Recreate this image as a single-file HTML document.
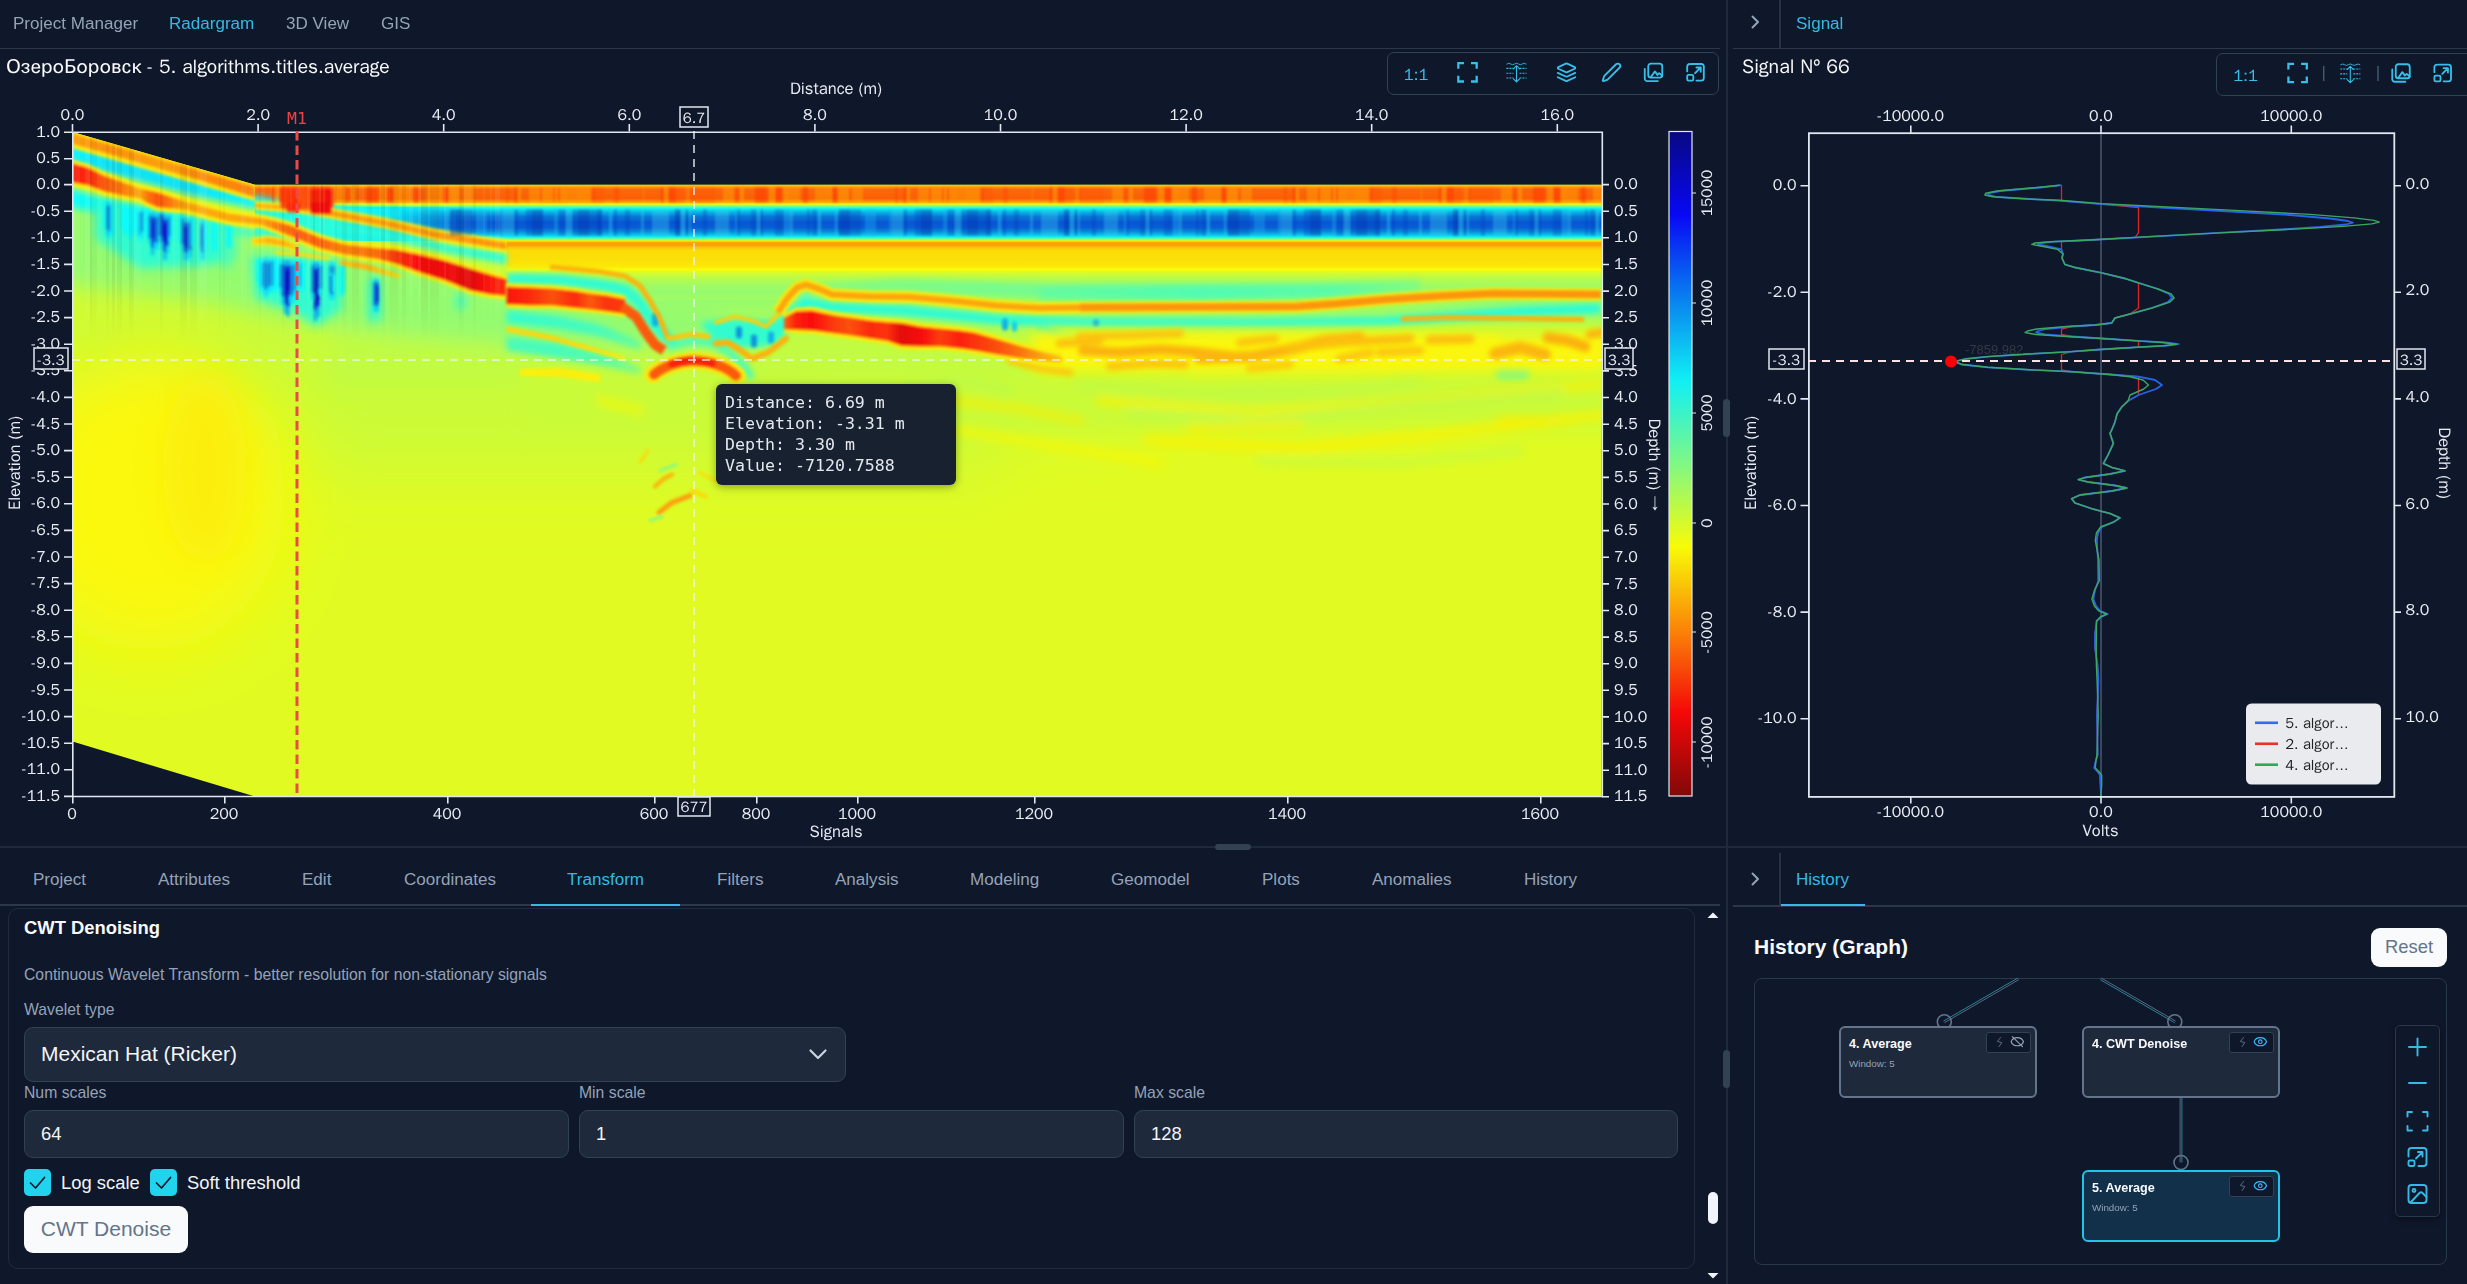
<!DOCTYPE html>
<html lang="en"><head><meta charset="utf-8"><title>Radargram</title>
<style>
*{box-sizing:border-box;margin:0;padding:0}
html,body{width:2467px;height:1284px;overflow:hidden;background:#0f172a}
body{position:relative;font-family:"Liberation Sans",sans-serif;color:#e2e8f0}
.abs{position:absolute}
.t{position:absolute;white-space:nowrap;line-height:1}
.tab{position:absolute;white-space:nowrap;font-size:17.06px;line-height:20px;color:#94a3b8}
.tab.on{color:#38b8e4}
.hl{position:absolute;height:1.5px;background:#2b384b}
.vl{position:absolute;width:2px;background:#263245}
.pf{font-family:"WenQuanYi Zen Hei","Liberation Sans",sans-serif}
.tb{position:absolute;border:1.5px solid #334155;border-radius:7px}
.lbl{position:absolute;white-space:nowrap;font-size:15.75px;line-height:18px;color:#94a3b8}
.inp{position:absolute;background:#1e293b;border:1.5px solid #334155;border-radius:9px;height:48px;font-size:18.4px;line-height:45px;padding-left:16px;color:#f1f5f9}
.cb{position:absolute;width:27px;height:27px;border-radius:5px;background:#22d3ee}
.node{position:absolute;width:198px;height:72px;border:2.5px solid #64748b;border-radius:6px;background:#1e293b}
.node b{position:absolute;left:8px;top:9px;font-size:12.6px;line-height:14px;color:#f8fafc;white-space:nowrap}
.node i{position:absolute;left:8px;top:30px;font-size:9.8px;line-height:11px;color:#94a3b8;font-style:normal;white-space:nowrap}
.node s{position:absolute;right:4px;top:4px;width:45px;height:21px;border:1px solid #334155;border-radius:3px;background:#0f172a;text-decoration:none}
svg{position:absolute;overflow:visible}
</style></head><body>
<svg style="left:0;top:0" width="1700" height="850" viewBox="0 0 1700 850"><defs><filter id="b1" filterUnits="userSpaceOnUse" x="0" y="60" width="1700" height="800"><feGaussianBlur stdDeviation="1"/></filter><filter id="b1_5" filterUnits="userSpaceOnUse" x="0" y="60" width="1700" height="800"><feGaussianBlur stdDeviation="1.5"/></filter><filter id="b2" filterUnits="userSpaceOnUse" x="0" y="60" width="1700" height="800"><feGaussianBlur stdDeviation="2"/></filter><filter id="b2_5" filterUnits="userSpaceOnUse" x="0" y="60" width="1700" height="800"><feGaussianBlur stdDeviation="2.5"/></filter><filter id="b3" filterUnits="userSpaceOnUse" x="0" y="60" width="1700" height="800"><feGaussianBlur stdDeviation="3"/></filter><filter id="b5" filterUnits="userSpaceOnUse" x="0" y="60" width="1700" height="800"><feGaussianBlur stdDeviation="5"/></filter><filter id="b7" filterUnits="userSpaceOnUse" x="0" y="60" width="1700" height="800"><feGaussianBlur stdDeviation="7"/></filter><filter id="b10" filterUnits="userSpaceOnUse" x="0" y="60" width="1700" height="800"><feGaussianBlur stdDeviation="10"/></filter><filter id="b18" filterUnits="userSpaceOnUse" x="0" y="60" width="1700" height="800"><feGaussianBlur stdDeviation="18"/></filter><filter id="b35" filterUnits="userSpaceOnUse" x="0" y="60" width="1700" height="800"><feGaussianBlur stdDeviation="35"/></filter><clipPath id="dc"><path d="M72.5 131.5 L255 184.2 H1601.6 V796 H255 L72.5 741 Z"/></clipPath><linearGradient id="rb" gradientUnits="userSpaceOnUse" x1="0" y1="184" x2="0" y2="300"><stop offset="0.0000" stop-color="#fbde08"/><stop offset="0.0129" stop-color="#fbb208"/><stop offset="0.0388" stop-color="#fb6908"/><stop offset="0.1207" stop-color="#fb5f08"/><stop offset="0.1509" stop-color="#fb9f08"/><stop offset="0.1681" stop-color="#fbf608"/><stop offset="0.1853" stop-color="#81fb81"/><stop offset="0.2026" stop-color="#16fbed"/><stop offset="0.2328" stop-color="#08bce9"/><stop offset="0.2759" stop-color="#0878d4"/><stop offset="0.3276" stop-color="#0856d4"/><stop offset="0.3707" stop-color="#085fd4"/><stop offset="0.4052" stop-color="#088bd8"/><stop offset="0.4353" stop-color="#08c6ed"/><stop offset="0.4569" stop-color="#20fbe3"/><stop offset="0.4724" stop-color="#95fb6e"/><stop offset="0.4853" stop-color="#fbed08"/><stop offset="0.5000" stop-color="#fba408"/><stop offset="0.5216" stop-color="#fb9f08"/><stop offset="0.5431" stop-color="#fbc608"/><stop offset="0.5690" stop-color="#fbdc08"/><stop offset="0.6724" stop-color="#fbe208"/><stop offset="0.7069" stop-color="#fbea08"/><stop offset="0.7328" stop-color="#fbfb08"/><stop offset="0.7586" stop-color="#d9fb2a"/><stop offset="0.8017" stop-color="#bcfb47"/><stop offset="0.8707" stop-color="#9ffb64"/><stop offset="0.9310" stop-color="#95fb6e"/><stop offset="1.0000" stop-color="#a4fb5f"/></linearGradient><linearGradient id="rf" x1="0" y1="0" x2="0" y2="1"><stop offset="0" stop-color="#95fb6e"/><stop offset="1" stop-color="#95fb6e" stop-opacity="0"/></linearGradient><linearGradient id="cf" gradientUnits="userSpaceOnUse" x1="330" y1="0" x2="478" y2="0"><stop offset="0" stop-color="#20fbe3"/><stop offset=".45" stop-color="#08edfb" stop-opacity=".85"/><stop offset="1" stop-color="#08b2e6" stop-opacity="0"/></linearGradient><pattern id="so" patternUnits="userSpaceOnUse" x="255" y="0" width="389" height="800"><rect x="17" y="187" width="3" height="15" fill="#ff2a00" opacity="0.45"/><rect x="20" y="187" width="4" height="15" fill="#ffc400" opacity="0.3"/><rect x="24" y="187" width="8" height="15" fill="#ff2a00" opacity="0.45"/><rect x="32" y="187" width="8" height="15" fill="#ff5000" opacity="0.3"/><rect x="43" y="187" width="2" height="15" fill="#ffc400" opacity="0.3"/><rect x="47" y="187" width="2" height="15" fill="#ff3c00" opacity="0.3"/><rect x="49" y="187" width="5" height="15" fill="#ff5000" opacity="0.3"/><rect x="54" y="187" width="3" height="15" fill="#ff5000" opacity="0.3"/><rect x="57" y="187" width="3" height="15" fill="#ff5000" opacity="0.3"/><rect x="60" y="187" width="4" height="15" fill="#ff5000" opacity="0.3"/><rect x="64" y="187" width="3" height="15" fill="#ff5000" opacity="0.3"/><rect x="67" y="187" width="4" height="15" fill="#ff5000" opacity="0.3"/><rect x="79" y="187" width="11" height="15" fill="#ffc400" opacity="0.3"/><rect x="90" y="187" width="6" height="15" fill="#ff3c00" opacity="0.3"/><rect x="96" y="187" width="4" height="15" fill="#ffb000" opacity="0.45"/><rect x="111" y="187" width="11" height="15" fill="#ff2a00" opacity="0.45"/><rect x="122" y="187" width="3" height="15" fill="#ff3c00" opacity="0.3"/><rect x="125" y="187" width="6" height="15" fill="#ffc400" opacity="0.3"/><rect x="131" y="187" width="8" height="15" fill="#ff2a00" opacity="0.45"/><rect x="139" y="187" width="6" height="15" fill="#ffb000" opacity="0.45"/><rect x="145" y="187" width="11" height="15" fill="#ffc400" opacity="0.3"/><rect x="159" y="187" width="5" height="15" fill="#ff2a00" opacity="0.45"/><rect x="171" y="187" width="11" height="15" fill="#ffc400" opacity="0.3"/><rect x="182" y="187" width="6" height="15" fill="#ffc400" opacity="0.3"/><rect x="188" y="187" width="6" height="15" fill="#ff2a00" opacity="0.45"/><rect x="194" y="187" width="11" height="15" fill="#ffb000" opacity="0.45"/><rect x="208" y="187" width="8" height="15" fill="#ffc400" opacity="0.3"/><rect x="216" y="187" width="3" height="15" fill="#ffc400" opacity="0.3"/><rect x="251" y="187" width="3" height="15" fill="#ff3c00" opacity="0.3"/><rect x="258" y="187" width="2" height="15" fill="#ff5000" opacity="0.3"/><rect x="260" y="187" width="3" height="15" fill="#ff2a00" opacity="0.45"/><rect x="263" y="187" width="3" height="15" fill="#ffb000" opacity="0.45"/><rect x="272" y="187" width="2" height="15" fill="#ff5000" opacity="0.3"/><rect x="274" y="187" width="8" height="15" fill="#ffc400" opacity="0.3"/><rect x="282" y="187" width="3" height="15" fill="#ffc400" opacity="0.3"/><rect x="285" y="187" width="2" height="15" fill="#ff3c00" opacity="0.3"/><rect x="287" y="187" width="11" height="15" fill="#ffb000" opacity="0.45"/><rect x="298" y="187" width="2" height="15" fill="#ff5000" opacity="0.3"/><rect x="300" y="187" width="3" height="15" fill="#ffb000" opacity="0.45"/><rect x="303" y="187" width="2" height="15" fill="#ff3c00" opacity="0.3"/><rect x="305" y="187" width="8" height="15" fill="#ffb000" opacity="0.45"/><rect x="313" y="187" width="6" height="15" fill="#ffc400" opacity="0.3"/><rect x="319" y="187" width="3" height="15" fill="#ffc400" opacity="0.3"/><rect x="322" y="187" width="11" height="15" fill="#ffb000" opacity="0.45"/><rect x="333" y="187" width="3" height="15" fill="#ffb000" opacity="0.45"/><rect x="336" y="187" width="5" height="15" fill="#ff3c00" opacity="0.3"/><rect x="341" y="187" width="2" height="15" fill="#ff5000" opacity="0.3"/><rect x="343" y="187" width="6" height="15" fill="#ff5000" opacity="0.3"/><rect x="359" y="187" width="5" height="15" fill="#ff3c00" opacity="0.3"/><rect x="388" y="187" width="4" height="15" fill="#ffc400" opacity="0.3"/><rect x="8" y="209" width="11" height="26" fill="#40e0f8" opacity="0.3"/><rect x="19" y="209" width="6" height="26" fill="#40e0f8" opacity="0.3"/><rect x="31" y="209" width="6" height="26" fill="#0424a8" opacity="0.4"/><rect x="37" y="209" width="4" height="26" fill="#30d8f8" opacity="0.4"/><rect x="41" y="209" width="4" height="26" fill="#0630b4" opacity="0.25"/><rect x="45" y="209" width="2" height="26" fill="#40e0f8" opacity="0.3"/><rect x="59" y="209" width="4" height="26" fill="#0838c0" opacity="0.3"/><rect x="71" y="209" width="6" height="26" fill="#40e0f8" opacity="0.3"/><rect x="77" y="209" width="8" height="26" fill="#40e0f8" opacity="0.3"/><rect x="91" y="209" width="2" height="26" fill="#20b8f8" opacity="0.32"/><rect x="93" y="209" width="3" height="26" fill="#0630b4" opacity="0.25"/><rect x="107" y="209" width="6" height="26" fill="#0630b4" opacity="0.25"/><rect x="113" y="209" width="3" height="26" fill="#40e0f8" opacity="0.3"/><rect x="116" y="209" width="3" height="26" fill="#0838c0" opacity="0.3"/><rect x="131" y="209" width="4" height="26" fill="#0838c0" opacity="0.3"/><rect x="135" y="209" width="5" height="26" fill="#0630b4" opacity="0.25"/><rect x="140" y="209" width="6" height="26" fill="#20b8f8" opacity="0.32"/><rect x="146" y="209" width="3" height="26" fill="#40e0f8" opacity="0.3"/><rect x="163" y="209" width="3" height="26" fill="#0630b4" opacity="0.25"/><rect x="168" y="209" width="3" height="26" fill="#0838c0" opacity="0.3"/><rect x="171" y="209" width="3" height="26" fill="#0630b4" opacity="0.25"/><rect x="174" y="209" width="3" height="26" fill="#30d8f8" opacity="0.4"/><rect x="191" y="209" width="2" height="26" fill="#30d8f8" opacity="0.4"/><rect x="195" y="209" width="11" height="26" fill="#0424a8" opacity="0.4"/><rect x="206" y="209" width="11" height="26" fill="#0630b4" opacity="0.25"/><rect x="221" y="209" width="11" height="26" fill="#20b8f8" opacity="0.32"/><rect x="245" y="209" width="3" height="26" fill="#20b8f8" opacity="0.32"/><rect x="248" y="209" width="11" height="26" fill="#40e0f8" opacity="0.3"/><rect x="259" y="209" width="4" height="26" fill="#0838c0" opacity="0.3"/><rect x="271" y="209" width="6" height="26" fill="#0838c0" opacity="0.3"/><rect x="277" y="209" width="11" height="26" fill="#0424a8" opacity="0.4"/><rect x="299" y="209" width="4" height="26" fill="#20b8f8" opacity="0.32"/><rect x="303" y="209" width="8" height="26" fill="#0838c0" opacity="0.3"/><rect x="311" y="209" width="6" height="26" fill="#40e0f8" opacity="0.3"/><rect x="317" y="209" width="6" height="26" fill="#0630b4" opacity="0.25"/><rect x="323" y="209" width="11" height="26" fill="#0424a8" opacity="0.4"/><rect x="334" y="209" width="8" height="26" fill="#0630b4" opacity="0.25"/><rect x="342" y="209" width="5" height="26" fill="#0424a8" opacity="0.4"/><rect x="354" y="209" width="3" height="26" fill="#30d8f8" opacity="0.4"/><rect x="359" y="209" width="3" height="26" fill="#0838c0" opacity="0.3"/><rect x="370" y="209" width="5" height="26" fill="#0630b4" opacity="0.25"/><rect x="386" y="209" width="3" height="26" fill="#40e0f8" opacity="0.3"/></pattern><linearGradient id="g1" gradientUnits="userSpaceOnUse" x1="66" y1="0" x2="400" y2="0"><stop offset="0.000" stop-color="#08f6fb"/><stop offset="0.132" stop-color="#08e3f8"/><stop offset="0.374" stop-color="#08e3f8"/><stop offset="0.566" stop-color="#08f6fb"/><stop offset="0.734" stop-color="#0dfbf6"/><stop offset="0.880" stop-color="#0dfbf6"/><stop offset="1.000" stop-color="#08edfb"/></linearGradient><linearGradient id="g2" gradientUnits="userSpaceOnUse" x1="66" y1="0" x2="300" y2="0"><stop offset="0.000" stop-color="#0dfbf6"/><stop offset="0.145" stop-color="#0dfbf6"/><stop offset="0.359" stop-color="#20fbe3"/><stop offset="0.615" stop-color="#33fbcf"/><stop offset="0.808" stop-color="#47fbbc"/><stop offset="1.000" stop-color="#5afba8"/></linearGradient><linearGradient id="g3" gradientUnits="userSpaceOnUse" x1="300" y1="0" x2="506.5" y2="0"><stop offset="0.000" stop-color="#33fbcf"/><stop offset="0.097" stop-color="#2afbd9"/><stop offset="0.412" stop-color="#2afbd9"/><stop offset="0.731" stop-color="#2afbd9"/><stop offset="1.000" stop-color="#2afbd9"/></linearGradient><linearGradient id="g4" gradientUnits="userSpaceOnUse" x1="66" y1="0" x2="255" y2="0"><stop offset="0.000" stop-color="#fb9f08"/><stop offset="0.233" stop-color="#fb9008"/><stop offset="0.497" stop-color="#fb9f08"/><stop offset="0.709" stop-color="#fb8b08"/><stop offset="1.000" stop-color="#fb8108"/></linearGradient><linearGradient id="g5" gradientUnits="userSpaceOnUse" x1="66" y1="0" x2="506.5" y2="0"><stop offset="0.000" stop-color="#fb1608"/><stop offset="0.050" stop-color="#fb2a08"/><stop offset="0.086" stop-color="#fb5a08"/><stop offset="0.134" stop-color="#fb8108"/><stop offset="0.168" stop-color="#fba808"/><stop offset="0.184" stop-color="#fb7808"/><stop offset="0.209" stop-color="#fb5108"/><stop offset="0.236" stop-color="#fb7808"/><stop offset="0.270" stop-color="#fba808"/><stop offset="0.370" stop-color="#fba808"/><stop offset="0.445" stop-color="#fb9f08"/><stop offset="0.474" stop-color="#fb8108"/><stop offset="0.509" stop-color="#fb6408"/><stop offset="0.577" stop-color="#fb6408"/><stop offset="0.633" stop-color="#fb8108"/><stop offset="0.706" stop-color="#fb6e08"/><stop offset="0.747" stop-color="#fb3d08"/><stop offset="0.799" stop-color="#fb0d08"/><stop offset="0.860" stop-color="#f10808"/><stop offset="0.917" stop-color="#e30808"/><stop offset="0.963" stop-color="#fb1608"/><stop offset="1.000" stop-color="#fb3308"/></linearGradient><linearGradient id="g6" gradientUnits="userSpaceOnUse" x1="255" y1="0" x2="506.5" y2="0"><stop offset="0.000" stop-color="#fbb208"/><stop offset="0.179" stop-color="#fb9f08"/><stop offset="0.302" stop-color="#fb9f08"/><stop offset="0.517" stop-color="#fb9f08"/><stop offset="0.714" stop-color="#fb9a08"/><stop offset="0.909" stop-color="#fb9508"/><stop offset="1.000" stop-color="#fb9508"/></linearGradient><linearGradient id="g7" gradientUnits="userSpaceOnUse" x1="252" y1="0" x2="298" y2="0"><stop offset="0.000" stop-color="#fbd908"/><stop offset="0.348" stop-color="#fbb208"/><stop offset="0.717" stop-color="#fbb208"/><stop offset="1.000" stop-color="#fbcf08"/></linearGradient><linearGradient id="g8" gradientUnits="userSpaceOnUse" x1="275" y1="0" x2="330" y2="0"><stop offset="0.000" stop-color="#fbe308"/><stop offset="0.455" stop-color="#fbd908"/><stop offset="1.000" stop-color="#fbe308"/></linearGradient><linearGradient id="g9" gradientUnits="userSpaceOnUse" x1="340" y1="0" x2="400" y2="0"><stop offset="0.000" stop-color="#fbc608"/><stop offset="0.417" stop-color="#fbb208"/><stop offset="1.000" stop-color="#fbd908"/></linearGradient><linearGradient id="g10" gradientUnits="userSpaceOnUse" x1="506.5" y1="0" x2="640" y2="0"><stop offset="0.000" stop-color="#33fbcf"/><stop offset="0.401" stop-color="#3dfbc6"/><stop offset="0.700" stop-color="#47fbbc"/><stop offset="1.000" stop-color="#64fb9f"/></linearGradient><linearGradient id="g11" gradientUnits="userSpaceOnUse" x1="506.5" y1="0" x2="640" y2="0"><stop offset="0.000" stop-color="#47fbbc"/><stop offset="0.401" stop-color="#47fbbc"/><stop offset="0.700" stop-color="#5afba8"/><stop offset="1.000" stop-color="#81fb81"/></linearGradient><linearGradient id="g12" gradientUnits="userSpaceOnUse" x1="1040" y1="0" x2="1420" y2="0"><stop offset="0.000" stop-color="#64fb9f"/><stop offset="0.421" stop-color="#51fbb2"/><stop offset="0.763" stop-color="#5afba8"/><stop offset="1.000" stop-color="#81fb81"/></linearGradient><linearGradient id="g13" gradientUnits="userSpaceOnUse" x1="790" y1="0" x2="1040" y2="0"><stop offset="0.000" stop-color="#81fb81"/><stop offset="0.440" stop-color="#6efb95"/><stop offset="1.000" stop-color="#64fb9f"/></linearGradient><linearGradient id="g14" gradientUnits="userSpaceOnUse" x1="506.5" y1="0" x2="625" y2="0"><stop offset="0.000" stop-color="#fb1608"/><stop offset="0.198" stop-color="#fb2a08"/><stop offset="0.384" stop-color="#fb5108"/><stop offset="0.578" stop-color="#fb2a08"/><stop offset="0.705" stop-color="#fb5a08"/><stop offset="0.848" stop-color="#fb3308"/><stop offset="1.000" stop-color="#fb3d08"/></linearGradient><linearGradient id="g15" gradientUnits="userSpaceOnUse" x1="506.5" y1="0" x2="625" y2="0"><stop offset="0.000" stop-color="#fbd908"/><stop offset="0.367" stop-color="#fbd408"/><stop offset="0.705" stop-color="#fbde08"/><stop offset="1.000" stop-color="#fbed08"/></linearGradient><linearGradient id="g16" gradientUnits="userSpaceOnUse" x1="520" y1="0" x2="600" y2="0"><stop offset="0.000" stop-color="#fbf108"/><stop offset="0.500" stop-color="#fbed08"/><stop offset="1.000" stop-color="#fbf108"/></linearGradient><linearGradient id="g17" gradientUnits="userSpaceOnUse" x1="784" y1="0" x2="1062" y2="0"><stop offset="0.000" stop-color="#fb6408"/><stop offset="0.043" stop-color="#fb2008"/><stop offset="0.101" stop-color="#fb0d08"/><stop offset="0.183" stop-color="#fb3d08"/><stop offset="0.237" stop-color="#fb5108"/><stop offset="0.309" stop-color="#fb2a08"/><stop offset="0.371" stop-color="#fb3308"/><stop offset="0.424" stop-color="#e30808"/><stop offset="0.489" stop-color="#f60808"/><stop offset="0.561" stop-color="#fb3d08"/><stop offset="0.633" stop-color="#fb2008"/><stop offset="0.683" stop-color="#fb3308"/><stop offset="0.777" stop-color="#fb5108"/><stop offset="0.856" stop-color="#fb7808"/><stop offset="0.921" stop-color="#fb9f08"/><stop offset="1.000" stop-color="#fbc608"/></linearGradient><pattern id="vs" patternUnits="userSpaceOnUse" x="72" y="0" width="467" height="800"><rect x="0" y="0" width="3" height="800" fill="#fff" opacity="0.08"/><rect x="3" y="0" width="2" height="800" fill="#fff" opacity="0.05"/><rect x="5" y="0" width="3" height="800" fill="#fff" opacity="0.05"/><rect x="13" y="0" width="5" height="800" fill="#fff" opacity="0.08"/><rect x="18" y="0" width="2" height="800" fill="#400" opacity="0.07"/><rect x="20" y="0" width="5" height="800" fill="#400" opacity="0.03"/><rect x="25" y="0" width="5" height="800" fill="#fff" opacity="0.03"/><rect x="34" y="0" width="3" height="800" fill="#400" opacity="0.05"/><rect x="40" y="0" width="3" height="800" fill="#400" opacity="0.07"/><rect x="43" y="0" width="2" height="800" fill="#fff" opacity="0.03"/><rect x="45" y="0" width="3" height="800" fill="#400" opacity="0.05"/><rect x="48" y="0" width="2" height="800" fill="#400" opacity="0.07"/><rect x="57" y="0" width="3" height="800" fill="#400" opacity="0.07"/><rect x="60" y="0" width="2" height="800" fill="#400" opacity="0.05"/><rect x="62" y="0" width="7" height="800" fill="#fff" opacity="0.05"/><rect x="86" y="0" width="2" height="800" fill="#fff" opacity="0.03"/><rect x="88" y="0" width="3" height="800" fill="#400" opacity="0.05"/><rect x="101" y="0" width="2" height="800" fill="#fff" opacity="0.05"/><rect x="108" y="0" width="7" height="800" fill="#400" opacity="0.07"/><rect x="115" y="0" width="3" height="800" fill="#fff" opacity="0.05"/><rect x="118" y="0" width="7" height="800" fill="#400" opacity="0.05"/><rect x="125" y="0" width="3" height="800" fill="#fff" opacity="0.03"/><rect x="128" y="0" width="2" height="800" fill="#fff" opacity="0.08"/><rect x="130" y="0" width="5" height="800" fill="#fff" opacity="0.08"/><rect x="147" y="0" width="2" height="800" fill="#400" opacity="0.03"/><rect x="151" y="0" width="2" height="800" fill="#400" opacity="0.03"/><rect x="169" y="0" width="2" height="800" fill="#fff" opacity="0.08"/><rect x="171" y="0" width="4" height="800" fill="#fff" opacity="0.05"/><rect x="177" y="0" width="2" height="800" fill="#fff" opacity="0.05"/><rect x="179" y="0" width="3" height="800" fill="#fff" opacity="0.05"/><rect x="187" y="0" width="2" height="800" fill="#400" opacity="0.03"/><rect x="189" y="0" width="4" height="800" fill="#fff" opacity="0.05"/><rect x="198" y="0" width="2" height="800" fill="#fff" opacity="0.05"/><rect x="205" y="0" width="2" height="800" fill="#fff" opacity="0.08"/><rect x="210" y="0" width="2" height="800" fill="#400" opacity="0.07"/><rect x="218" y="0" width="2" height="800" fill="#fff" opacity="0.05"/><rect x="225" y="0" width="2" height="800" fill="#fff" opacity="0.03"/><rect x="230" y="0" width="2" height="800" fill="#fff" opacity="0.03"/><rect x="235" y="0" width="3" height="800" fill="#fff" opacity="0.08"/><rect x="241" y="0" width="2" height="800" fill="#400" opacity="0.07"/><rect x="247" y="0" width="2" height="800" fill="#fff" opacity="0.08"/><rect x="249" y="0" width="2" height="800" fill="#400" opacity="0.07"/><rect x="251" y="0" width="2" height="800" fill="#fff" opacity="0.05"/><rect x="258" y="0" width="5" height="800" fill="#fff" opacity="0.03"/><rect x="263" y="0" width="2" height="800" fill="#400" opacity="0.03"/><rect x="270" y="0" width="5" height="800" fill="#400" opacity="0.05"/><rect x="280" y="0" width="7" height="800" fill="#400" opacity="0.05"/><rect x="287" y="0" width="3" height="800" fill="#fff" opacity="0.03"/><rect x="290" y="0" width="2" height="800" fill="#fff" opacity="0.05"/><rect x="295" y="0" width="2" height="800" fill="#400" opacity="0.03"/><rect x="297" y="0" width="3" height="800" fill="#400" opacity="0.05"/><rect x="307" y="0" width="2" height="800" fill="#fff" opacity="0.05"/><rect x="309" y="0" width="2" height="800" fill="#400" opacity="0.05"/><rect x="311" y="0" width="2" height="800" fill="#400" opacity="0.07"/><rect x="313" y="0" width="3" height="800" fill="#fff" opacity="0.05"/><rect x="318" y="0" width="7" height="800" fill="#400" opacity="0.05"/><rect x="325" y="0" width="2" height="800" fill="#400" opacity="0.03"/><rect x="327" y="0" width="3" height="800" fill="#fff" opacity="0.03"/><rect x="330" y="0" width="4" height="800" fill="#400" opacity="0.05"/><rect x="337" y="0" width="4" height="800" fill="#fff" opacity="0.08"/><rect x="346" y="0" width="3" height="800" fill="#fff" opacity="0.08"/><rect x="349" y="0" width="7" height="800" fill="#400" opacity="0.07"/><rect x="356" y="0" width="2" height="800" fill="#fff" opacity="0.03"/><rect x="358" y="0" width="2" height="800" fill="#400" opacity="0.05"/><rect x="360" y="0" width="7" height="800" fill="#400" opacity="0.05"/><rect x="372" y="0" width="2" height="800" fill="#fff" opacity="0.08"/><rect x="377" y="0" width="7" height="800" fill="#fff" opacity="0.03"/><rect x="387" y="0" width="3" height="800" fill="#400" opacity="0.07"/><rect x="390" y="0" width="2" height="800" fill="#400" opacity="0.05"/><rect x="392" y="0" width="7" height="800" fill="#fff" opacity="0.05"/><rect x="401" y="0" width="3" height="800" fill="#400" opacity="0.05"/><rect x="411" y="0" width="2" height="800" fill="#fff" opacity="0.05"/><rect x="418" y="0" width="2" height="800" fill="#fff" opacity="0.05"/><rect x="423" y="0" width="5" height="800" fill="#fff" opacity="0.08"/><rect x="435" y="0" width="7" height="800" fill="#fff" opacity="0.05"/><rect x="442" y="0" width="3" height="800" fill="#fff" opacity="0.05"/><rect x="445" y="0" width="3" height="800" fill="#fff" opacity="0.05"/><rect x="448" y="0" width="2" height="800" fill="#400" opacity="0.03"/><rect x="450" y="0" width="2" height="800" fill="#fff" opacity="0.05"/><rect x="452" y="0" width="4" height="800" fill="#fff" opacity="0.03"/><rect x="456" y="0" width="3" height="800" fill="#fff" opacity="0.03"/><rect x="459" y="0" width="4" height="800" fill="#400" opacity="0.07"/><rect x="463" y="0" width="7" height="800" fill="#fff" opacity="0.05"/></pattern><linearGradient id="vsf" gradientUnits="userSpaceOnUse" x1="0" y1="130" x2="0" y2="400"><stop offset="0" stop-color="#fff"/><stop offset=".5" stop-color="#fff"/><stop offset=".78" stop-color="#fff" stop-opacity="0"/></linearGradient><mask id="vsm"><rect x="60" y="120" width="1560" height="300" fill="url(#vsf)"/></mask></defs><g transform="translate(0 0.6)"><g clip-path="url(#dc)"><g><rect x="60" y="120" width="1560" height="690" fill="#e1fb22"/><g filter="url(#b35)"><rect x="40" y="270" width="1100" height="150" fill="#c8fb3b"/><rect x="300" y="300" width="700" height="170" fill="#cafb38"/></g><g filter="url(#b35)"><ellipse cx="150" cy="500" rx="135" ry="150" fill="#fbf808"/><rect x="40" y="385" width="170" height="215" fill="#fbf808"/><ellipse cx="170" cy="440" rx="110" ry="60" fill="#fbf808"/></g><g filter="url(#b18)"><ellipse cx="205" cy="468" rx="42" ry="95" fill="#fbee08"/></g><g filter="url(#b10)"><rect x="330" y="300" width="1300" height="85" fill="#c1fb42"/><rect x="520" y="370" width="1100" height="60" fill="#cafb38"/><path d="M60 190 L255 222 L420 262 L520 292 L720 300 L720 345 L520 345 L400 335 L300 322 L200 300 L60 285 Z" fill="#95fb6e"/></g></g><g><rect x="255" y="184" width="1350" height="56" fill="url(#rb)"/><rect x="506.5" y="239" width="1100" height="61" fill="url(#rb)"/><rect x="506.5" y="299.5" width="1100" height="40" fill="url(#rf)"/><rect x="255" y="206.500" width="75" height="34" fill="#20fbe3"/><rect x="330" y="206.500" width="148" height="34" fill="url(#cf)"/></g><g filter="url(#b3)"><path d="M66 142 L110 154.5 L191 177 L255 195 L311 205 L360 208 L400 209 L400 217 L360 216 L311 214 L255 209 L191 195 L110 173.5 L66 161 Z" fill="url(#g1)"/><path d="M66 186 L100 197 L150 208 L210 221.5 L255 229 L300 242.5 L300 249.5 L255 237 L210 230.5 L150 218 L100 213 L66 206 Z" fill="url(#g2)"/><path d="M300 217 L320 219.5 L385 229 L451 243.7 L506.5 253 L506.5 264 L451 253.7 L385 239 L320 228.5 L300 225 Z" fill="url(#g3)"/></g><g filter="url(#b5)"><path d="M95 200 L150 208 L236 228 L236 258 L200 266 L140 268 L95 238 Z" fill="#33fbcf"/><path d="M250 256 L300 256 L342 262 L342 308 L316 326 L296 312 L256 298 Z" fill="#33fbcf"/><rect x="368" y="276" width="13" height="46" rx="6.5" fill="#33fbcf"/><rect x="324" y="270" width="13" height="36" rx="6.5" fill="#33fbcf"/><rect x="222" y="232" width="10" height="36" rx="5" fill="#51fbb2"/><rect x="455" y="292" width="11" height="18" rx="5.5" fill="#47fbbc"/></g><g filter="url(#b1_5)"><rect x="103.5" y="200.8" width="3.1" height="26" fill="#08f9fb"/><rect x="106" y="201.8" width="3.1" height="33" fill="#08dff6"/><rect x="106" y="205.1" width="3.1" height="23.7" fill="#0884d5"/><rect x="108.5" y="201.3" width="3.1" height="36.1" fill="#08eafa"/><rect x="108.5" y="204.9" width="3.1" height="26" fill="#089add"/><rect x="111" y="205.4" width="3.1" height="28.9" fill="#08f8fb"/><rect x="121" y="204.5" width="3.1" height="23.3" fill="#0efbf5"/><rect x="123.5" y="206.4" width="3.1" height="27.7" fill="#08fafb"/><rect x="126" y="206.1" width="3.1" height="28.3" fill="#08fbfb"/><rect x="128.5" y="207.9" width="3.1" height="31.1" fill="#08f9fb"/><rect x="131" y="205.2" width="3.1" height="26.3" fill="#0bfbf8"/><rect x="133.5" y="207.6" width="3.1" height="25.1" fill="#09fbfa"/><rect x="136" y="208.6" width="3.1" height="26.1" fill="#0ffbf4"/><rect x="138.5" y="208.6" width="3.1" height="32" fill="#08f4fb"/><rect x="138.5" y="211.8" width="3.1" height="23" fill="#08aee4"/><rect x="141" y="208.1" width="3.1" height="27.9" fill="#08f1fb"/><rect x="141" y="210.8" width="3.1" height="20.1" fill="#08a7e2"/><rect x="143.5" y="208" width="3.1" height="25.9" fill="#14fbef"/><rect x="146" y="208.2" width="3.1" height="29.7" fill="#0afbf9"/><rect x="148.5" y="211.4" width="3.1" height="32.2" fill="#08d9f4"/><rect x="148.5" y="214.7" width="3.1" height="23.2" fill="#0878d4"/><rect x="151" y="212" width="3.1" height="42.6" fill="#08c2ec"/><rect x="151" y="216.3" width="3.1" height="30.7" fill="#084ad4"/><rect x="151" y="220.6" width="3.1" height="21.3" fill="#0811d4"/><rect x="153.5" y="211.6" width="3.1" height="37" fill="#08d4f2"/><rect x="153.5" y="215.3" width="3.1" height="26.6" fill="#086fd4"/><rect x="153.5" y="219" width="3.1" height="18.5" fill="#082dd4"/><rect x="156" y="213.3" width="3.1" height="35.4" fill="#08e1f7"/><rect x="156" y="216.8" width="3.1" height="25.5" fill="#0888d7"/><rect x="158.5" y="210" width="3.1" height="31.1" fill="#08e4f8"/><rect x="158.5" y="213.1" width="3.1" height="22.4" fill="#088dd8"/><rect x="161" y="210.2" width="3.1" height="37.9" fill="#08d1f1"/><rect x="161" y="214" width="3.1" height="27.3" fill="#0867d4"/><rect x="161" y="217.8" width="3.1" height="18.9" fill="#0827d4"/><rect x="163.5" y="214.6" width="3.1" height="44.6" fill="#08b6e8"/><rect x="163.5" y="219" width="3.1" height="32.1" fill="#0832d4"/><rect x="163.5" y="223.5" width="3.1" height="22.3" fill="#0808cd"/><rect x="166" y="214.6" width="3.1" height="37.5" fill="#08cdf0"/><rect x="166" y="218.3" width="3.1" height="27" fill="#085fd4"/><rect x="166" y="222.1" width="3.1" height="18.7" fill="#0821d4"/><rect x="168.5" y="212.8" width="3.1" height="28.1" fill="#08ecfb"/><rect x="168.5" y="215.6" width="3.1" height="20.2" fill="#089edf"/><rect x="171" y="214.5" width="3.1" height="22.4" fill="#13fbf0"/><rect x="178.5" y="213.8" width="3.1" height="28.3" fill="#08f9fb"/><rect x="181" y="214.8" width="3.1" height="34.7" fill="#08e5f8"/><rect x="181" y="218.3" width="3.1" height="25" fill="#088fd9"/><rect x="183.5" y="217.9" width="3.1" height="40.9" fill="#08d7f3"/><rect x="183.5" y="222" width="3.1" height="29.5" fill="#0873d4"/><rect x="183.5" y="226.1" width="3.1" height="20.5" fill="#0830d4"/><rect x="186" y="218" width="3.1" height="41.5" fill="#08d3f2"/><rect x="186" y="222.2" width="3.1" height="29.9" fill="#086bd4"/><rect x="186" y="226.3" width="3.1" height="20.7" fill="#082ad4"/><rect x="188.5" y="218" width="3.1" height="38.2" fill="#08dcf5"/><rect x="188.5" y="221.8" width="3.1" height="27.5" fill="#087dd4"/><rect x="191" y="216.5" width="3.1" height="29" fill="#08f8fb"/><rect x="201" y="218.7" width="3.1" height="40.1" fill="#08d5f3"/><rect x="201" y="222.7" width="3.1" height="28.9" fill="#086fd4"/><rect x="201" y="226.8" width="3.1" height="20" fill="#082dd4"/><rect x="203.5" y="221.1" width="3.1" height="28.9" fill="#08fbfb"/><rect x="211" y="221.5" width="3.1" height="25.6" fill="#13fbef"/><rect x="213.5" y="223" width="3.1" height="28.3" fill="#08fbfb"/><rect x="226" y="223.1" width="3.1" height="24.1" fill="#08fbfb"/><rect x="228.5" y="223.8" width="3.1" height="23" fill="#10fbf2"/><rect x="256.5" y="258.8" width="3.1" height="24.3" fill="#13fbf0"/><rect x="259" y="258.4" width="3.1" height="29.8" fill="#0afbf9"/><rect x="261.5" y="259" width="3.1" height="32.8" fill="#08edfb"/><rect x="261.5" y="262.3" width="3.1" height="23.6" fill="#08a0df"/><rect x="264" y="256.7" width="3.1" height="40" fill="#08e3f8"/><rect x="264" y="260.7" width="3.1" height="28.8" fill="#088bd8"/><rect x="266.5" y="259.4" width="3.1" height="33.8" fill="#08e5f8"/><rect x="266.5" y="262.8" width="3.1" height="24.3" fill="#088fd9"/><rect x="269" y="257.3" width="3.1" height="33.8" fill="#08e4f8"/><rect x="269" y="260.7" width="3.1" height="24.3" fill="#088dd9"/><rect x="271.5" y="257.2" width="3.1" height="34.1" fill="#08f3fb"/><rect x="271.5" y="260.6" width="3.1" height="24.6" fill="#08ace4"/><rect x="274" y="259.2" width="3.1" height="31.2" fill="#0bfbf8"/><rect x="276.5" y="257.3" width="3.1" height="30.9" fill="#08fafb"/><rect x="279" y="260.9" width="3.1" height="32" fill="#08ecfb"/><rect x="279" y="264.1" width="3.1" height="23.1" fill="#089dde"/><rect x="281.5" y="259.2" width="3.1" height="44.5" fill="#08d7f3"/><rect x="281.5" y="263.6" width="3.1" height="32.1" fill="#0874d4"/><rect x="284" y="259.3" width="3.1" height="53.7" fill="#08beea"/><rect x="284" y="264.6" width="3.1" height="38.7" fill="#0842d4"/><rect x="284" y="270" width="3.1" height="26.9" fill="#080bd4"/><rect x="286.5" y="259.8" width="3.1" height="56.1" fill="#08b2e6"/><rect x="286.5" y="265.4" width="3.1" height="40.4" fill="#080dd4"/><rect x="286.5" y="271" width="3.1" height="28.1" fill="#0808b8"/><rect x="289" y="259.7" width="3.1" height="43.2" fill="#08cdf0"/><rect x="289" y="264" width="3.1" height="31.1" fill="#085fd4"/><rect x="289" y="268.3" width="3.1" height="21.6" fill="#0821d4"/><rect x="291.5" y="260" width="3.1" height="42.3" fill="#08e6f9"/><rect x="291.5" y="264.3" width="3.1" height="30.5" fill="#0891da"/><rect x="294" y="259.7" width="3.1" height="36.8" fill="#08f3fb"/><rect x="294" y="263.4" width="3.1" height="26.5" fill="#08ace4"/><rect x="296.5" y="258.7" width="3.1" height="26.4" fill="#0bfbf7"/><rect x="299" y="259.6" width="3.1" height="31.7" fill="#08f4fb"/><rect x="299" y="262.8" width="3.1" height="22.8" fill="#08aee4"/><rect x="301.5" y="261.3" width="3.1" height="28.8" fill="#08fbfb"/><rect x="311.5" y="261.2" width="3.1" height="37.8" fill="#08daf4"/><rect x="311.5" y="265" width="3.1" height="27.2" fill="#0879d4"/><rect x="314" y="262.5" width="3.1" height="57.5" fill="#08b2e6"/><rect x="314" y="268.3" width="3.1" height="41.4" fill="#080dd4"/><rect x="314" y="274" width="3.1" height="28.8" fill="#0808b8"/><rect x="316.5" y="261.7" width="3.1" height="54.2" fill="#08b2e6"/><rect x="316.5" y="267.1" width="3.1" height="39" fill="#081fd4"/><rect x="316.5" y="272.5" width="3.1" height="27.1" fill="#0808c1"/><rect x="319" y="261.5" width="3.1" height="32.5" fill="#08f1fb"/><rect x="319" y="264.8" width="3.1" height="23.4" fill="#08a7e2"/><rect x="329" y="261" width="3.1" height="37.4" fill="#08edfb"/><rect x="329" y="264.8" width="3.1" height="26.9" fill="#08a0df"/><rect x="331.5" y="261.5" width="3.1" height="37.2" fill="#08e4f8"/><rect x="331.5" y="265.2" width="3.1" height="26.8" fill="#088dd8"/><rect x="339" y="264.8" width="3.1" height="31.1" fill="#0efbf4"/><rect x="341.5" y="262.2" width="3.1" height="30.9" fill="#0bfbf8"/><rect x="373" y="278.3" width="3.1" height="32.7" fill="#08dff6"/><rect x="373" y="281.5" width="3.1" height="23.6" fill="#0884d5"/><rect x="375.5" y="278.7" width="3.1" height="32.2" fill="#08c7ed"/><rect x="375.5" y="281.9" width="3.1" height="23.2" fill="#0853d4"/><rect x="375.5" y="285.1" width="3.1" height="16.1" fill="#0818d4"/><rect x="330" y="272.3" width="3.1" height="26.3" fill="#08dbf5"/><rect x="330" y="275" width="3.1" height="18.9" fill="#087cd4"/><rect x="332.5" y="274.5" width="3.1" height="16.7" fill="#08f7fb"/></g><g filter="url(#b3)"><path d="M506.5 278 L560 279 L600 284 L625 289 L640 302 L650 318 L662 332 L672 342" fill="none" stroke="#2afbd9" stroke-width="11" stroke-linecap="butt" stroke-linejoin="round"/><path d="M506.5 309.5 L560 315.5 L600 324 L640 340.5 L640 349.5 L600 336 L560 328.5 L506.5 322.5 Z" fill="url(#g10)"/><path d="M506.5 336 L560 342 L600 351 L640 366 L640 374 L600 365 L560 358 L506.5 350 Z" fill="url(#g11)"/><path d="M700 322 L730 318 L775 320 L790 306 L800 300 L812 304 L795 325 L775 345 L740 348 L712 338 Z" fill="#33fbcf"/><path d="M668 346 L690 340 L712 342 L730 352 L745 366 L752 378" fill="none" stroke="#3dfbc6" stroke-width="7" stroke-linecap="butt" stroke-linejoin="round"/><path d="M800 300 L832 307 L909 310.5 L996 319 L1080 322 L1250 322.5 L1385 321 L1450 316 L1520 311 L1601 308" fill="none" stroke="#25fbde" stroke-width="10" stroke-linecap="butt" stroke-linejoin="round"/><path d="M1040 284.5 L1200 284 L1330 283 L1420 280 L1420 290 L1330 297 L1200 300 L1040 299.5 Z" fill="url(#g12)"/><path d="M790 285 L900 278 L1040 283 L1040 297 L900 290 L790 295 Z" fill="url(#g13)" opacity="0.7"/><rect x="1500" y="336" width="60" height="14" rx="7" fill="#33fbcf"/><rect x="1495" y="365" width="35" height="13" rx="6.5" fill="#51fbb2"/><path d="M1040 327 L1060 335 L1082 340" fill="none" stroke="#3dfbc6" stroke-width="7" stroke-linecap="round" stroke-linejoin="round"/></g><g filter="url(#b1_5)"><rect x="736" y="326" width="6" height="12" rx="3" fill="#0895db"/><rect x="751" y="334" width="6" height="13" rx="3" fill="#0895db"/><rect x="768" y="331" width="6" height="12" rx="3" fill="#08b2e6"/><rect x="652" y="312" width="7" height="14" rx="3.5" fill="#08b2e6"/><rect x="1002" y="318" width="6" height="12" rx="3" fill="#08b2e6"/><rect x="1012" y="321" width="5" height="10" rx="2.5" fill="#08cff1"/><rect x="1093" y="319" width="6" height="7" rx="3" fill="#08b2e6"/></g><g filter="url(#b7)"><rect x="1030" y="330" width="580" height="42" rx="14" fill="#fbf608"/><rect x="1180" y="340" width="260" height="34" rx="14" fill="#fbf608"/></g><g filter="url(#b2_5)"><path d="M1080 336 L1130 335 L1180 333" fill="none" stroke="#fbc608" stroke-width="8" stroke-linecap="round" stroke-linejoin="round"/><path d="M1083 350 L1120 352 L1160 349 L1200 352 L1235 356" fill="none" stroke="#fbb208" stroke-width="10" stroke-linecap="round" stroke-linejoin="round"/><path d="M1200 358 L1250 356 L1290 349 L1325 340 L1360 337" fill="none" stroke="#fbb708" stroke-width="11" stroke-linecap="round" stroke-linejoin="round"/><path d="M1290 347 L1340 342 L1410 338" fill="none" stroke="#fbc108" stroke-width="9" stroke-linecap="round" stroke-linejoin="round"/><path d="M1110 366 L1150 363 L1185 364" fill="none" stroke="#fbc608" stroke-width="8" stroke-linecap="round" stroke-linejoin="round"/><path d="M1430 339.5 L1470 338.5" fill="none" stroke="#fbc108" stroke-width="9" stroke-linecap="round" stroke-linejoin="round"/><path d="M1495 353 L1520 347 L1545 354" fill="none" stroke="#fbb708" stroke-width="12" stroke-linecap="round" stroke-linejoin="round"/><path d="M1548 337 L1568 340 L1585 346" fill="none" stroke="#fbb208" stroke-width="11" stroke-linecap="round" stroke-linejoin="round"/><path d="M1060 343 L1100 340" fill="none" stroke="#fbc108" stroke-width="8" stroke-linecap="round" stroke-linejoin="round"/><path d="M1240 342 L1275 338" fill="none" stroke="#fbc608" stroke-width="8" stroke-linecap="round" stroke-linejoin="round"/><path d="M1380 352 L1420 350" fill="none" stroke="#fbca08" stroke-width="9" stroke-linecap="round" stroke-linejoin="round"/><path d="M1590 334 L1601 332" fill="none" stroke="#fbb708" stroke-width="9" stroke-linecap="round" stroke-linejoin="round"/><path d="M1010 360 L1040 368 L1070 372" fill="none" stroke="#fbca08" stroke-width="7" stroke-linecap="round" stroke-linejoin="round"/><path d="M1250 368 L1290 364" fill="none" stroke="#fbcf08" stroke-width="8" stroke-linecap="round" stroke-linejoin="round"/><path d="M1340 358 L1370 352" fill="none" stroke="#fbca08" stroke-width="9" stroke-linecap="round" stroke-linejoin="round"/></g><g filter="url(#b1_5)"><path d="M66 126.5 L255 181.5 L255 200.5 L66 145.5 Z" fill="#fbe808"/><path d="M66 129.5 L110 142 L160 156.5 L200 168 L255 184 L255 197 L200 180 L160 168.5 L110 154 L66 141.5 Z" fill="url(#g4)"/><path d="M66 129.5 L255 184.5" fill="none" stroke="#fbd908" stroke-width="3.5" stroke-linecap="butt" stroke-linejoin="round"/><path d="M66 157.5 L88 163.5 L104 171.5 L125 179 L140 184.5 L147 186 L158 188.5 L170 192.5 L185 197.5 L229 209.5 L262 214 L275 217 L290 221 L320 233.5 L345 240.5 L377 244 L395 245.5 L418 250 L445 256.5 L470 264.5 L490 270.5 L506.5 275 L506.5 299 L490 297.5 L470 293.5 L445 283.5 L418 275 L395 266.5 L377 262 L345 257.5 L320 251.5 L290 239 L275 233 L262 228 L229 224.5 L185 212.5 L170 211.5 L158 210.5 L147 206 L140 201.5 L125 199 L104 194.5 L88 188.5 L66 184.5 Z" fill="#fbed08"/><path d="M66 161 L88 167 L104 175 L125 182.5 L140 188 L147 189.5 L158 192 L170 196 L185 201 L229 213 L262 217.5 L275 220.5 L290 224.5 L320 237 L345 244 L377 247.5 L395 249 L418 253.5 L445 260 L470 268 L490 274 L506.5 278.5 L506.5 295.5 L490 294 L470 290 L445 280 L418 271.5 L395 263 L377 258.5 L345 254 L320 248 L290 235.5 L275 229.5 L262 224.5 L229 221 L185 209 L170 208 L158 207 L147 202.5 L140 198 L125 195.5 L104 191 L88 185 L66 181 Z" fill="url(#g5)"/><path d="M255 200.5 L300 203 L331 207.2 L385 216.8 L434.5 228 L483.5 236 L506.5 239.5 L506.5 251.5 L483.5 248 L434.5 240 L385 228.2 L331 218.2 L300 213 L255 209.5 Z" fill="#fbed08"/><path d="M255 203 L300 205.5 L331 209.7 L385 219.2 L434.5 230.5 L483.5 238.5 L506.5 242 L506.5 249 L483.5 245.5 L434.5 237.5 L385 225.8 L331 215.7 L300 210.5 L255 207 Z" fill="url(#g6)"/><rect x="280" y="187" width="54" height="22" rx="5" fill="#fb5108"/><rect x="310" y="188" width="22" height="26" rx="4" fill="#f10808"/><rect x="286" y="188" width="14" height="24" rx="4" fill="#fb2a08"/><path d="M252 237 L268 235 L285 238 L298 243.5 L298 251.5 L285 248 L268 245 L252 245 Z" fill="#fbed08"/><path d="M252 239 L268 237 L285 240 L298 245.5 L298 249.5 L285 246 L268 243 L252 243 Z" fill="url(#g7)"/><path d="M275 250.5 L300 252 L330 256.5 L330 259.5 L300 256 L275 253.5 Z" fill="url(#g8)"/><path d="M340 259.5 L365 263 L400 274 L400 278 L365 269 L340 264.5 Z" fill="url(#g9)"/></g><g filter="url(#b1_5)"><path d="M550 266.5 L600 271 L625 275.5 L640 285 L650 300 L660 318 L668 338" fill="none" stroke="#fbb208" stroke-width="5" stroke-linecap="butt" stroke-linejoin="round"/><path d="M506.5 283 L530 284 L552 285 L575 287.5 L590 290 L607 292 L625 295.5 L625 316.5 L607 314 L590 312 L575 310.5 L552 308 L530 308 L506.5 307 Z" fill="#fbed08"/><path d="M506.5 286 L530 287 L552 288 L575 290.5 L590 293 L607 295 L625 298.5 L625 313.5 L607 311 L590 309 L575 307.5 L552 305 L530 305 L506.5 304 Z" fill="url(#g14)"/><path d="M622 306 L636 316 L646 332 L655 344 L664 350" fill="none" stroke="#fb5a08" stroke-width="10" stroke-linecap="butt" stroke-linejoin="round"/><path d="M506.5 326 L550 334.5 L590 345.5 L625 356 L625 360 L590 350.5 L550 339.5 L506.5 331 Z" fill="url(#g15)"/><path d="M520 368.5 L560 367.5 L600 374 L600 382 L560 376.5 L520 375.5 Z" fill="url(#g16)"/><path d="M653 374 Q 668 362 692 360 Q 720 361 737 375" fill="none" stroke="#fbe808" stroke-width="17" stroke-linecap="round"/><path d="M654 374 Q 668 362 692 360 Q 720 361 736 375" fill="none" stroke="#fb5a08" stroke-width="10.500" stroke-linecap="round"/><path d="M672 363 Q 690 358 712 363" fill="none" stroke="#fb2008" stroke-width="8" stroke-linecap="round"/><path d="M668 338 L690 334 L708 336" fill="none" stroke="#fbc608" stroke-width="5" stroke-linecap="round" stroke-linejoin="round"/><path d="M716 343 L728 342 L741 350 L752 358 L768 352 L786 338" fill="none" stroke="#fbb208" stroke-width="6" stroke-linecap="round" stroke-linejoin="round"/><path d="M716 322 L735 316 L752 320 L766 326 L780 312" fill="none" stroke="#fbcf08" stroke-width="4" stroke-linecap="round" stroke-linejoin="round"/><path d="M778 312 L787 298 L797 287 L806 284 L818 288 L832 294 L870 296 L909 296.5 L950 300 L996 305 L1040 307.5 L1080 307 L1200 306.5 L1298 306 L1340 303 L1385 299 L1440 295.5 L1494 293 L1550 293.5 L1601 294" fill="none" stroke="#fbed08" stroke-width="12" stroke-linecap="butt" stroke-linejoin="round"/><path d="M778 312 L787 298 L797 287 L806 284 L818 288 L832 294 L870 296 L909 296.5 L950 300 L996 305 L1040 307.5 L1080 307" fill="none" stroke="#fba408" stroke-width="6.5" stroke-linecap="butt" stroke-linejoin="round"/><path d="M1080 307 L1200 306.5 L1298 306 L1340 303 L1385 299 L1440 295.5 L1494 293 L1550 293.5 L1601 294" fill="none" stroke="#fb9508" stroke-width="8" stroke-linecap="butt" stroke-linejoin="round"/><path d="M784 313.5 L796 307 L812 306.5 L835 311.5 L850 313.5 L870 316.5 L887 318 L902 319 L920 322.5 L940 324.5 L960 326.5 L974 328.5 L1000 336 L1022 342.5 L1040 347.5 L1062 352.5 L1062 365.5 L1040 363.5 L1022 361.5 L1000 358 L974 353.5 L960 351.5 L940 349.5 L920 349.5 L902 349 L887 344 L870 341.5 L850 338.5 L835 336.5 L812 333.5 L796 333 L784 332.5 Z" fill="#fbed08"/><path d="M784 317 L796 310.5 L812 310 L835 315 L850 317 L870 320 L887 321.5 L902 322.5 L920 326 L940 328 L960 330 L974 332 L1000 339.5 L1022 346 L1040 351 L1062 356 L1062 362 L1040 360 L1022 358 L1000 354.5 L974 350 L960 348 L940 346 L920 346 L902 345.5 L887 340.5 L870 338 L850 335 L835 333 L812 330 L796 329.5 L784 329 Z" fill="url(#g17)"/><path d="M1403 318.5 L1450 317 L1520 318 L1582 319" fill="none" stroke="#fbb208" stroke-width="5" stroke-linecap="round" stroke-linejoin="round"/></g><g filter="url(#b1_5)"><path d="M655 486 L664 478 L672 474" fill="none" stroke="#fbb208" stroke-width="4" stroke-linecap="round" stroke-linejoin="round"/><path d="M659 512 L672 502 L690 495" fill="none" stroke="#fb9f08" stroke-width="5" stroke-linecap="round" stroke-linejoin="round"/><path d="M692 490 L706 496" fill="none" stroke="#fbd908" stroke-width="4" stroke-linecap="round" stroke-linejoin="round"/><path d="M700 472 L715 480" fill="none" stroke="#fbde08" stroke-width="3" stroke-linecap="round" stroke-linejoin="round"/><path d="M640 462 L648 450" fill="none" stroke="#fbd908" stroke-width="3" stroke-linecap="round" stroke-linejoin="round"/><path d="M650 520 L662 516" fill="none" stroke="#81fb81" stroke-width="3" stroke-linecap="round" stroke-linejoin="round"/><path d="M660 470 L676 464" fill="none" stroke="#81fb81" stroke-width="3" stroke-linecap="round" stroke-linejoin="round"/></g><g filter="url(#b5)"><path d="M1150 440 L1300 448 L1450 432 L1601 415" fill="none" stroke="#fbf108" stroke-width="10" stroke-linecap="round" stroke-linejoin="round" opacity="0.8"/><path d="M1100 400 L1250 412 L1400 402 L1601 384" fill="none" stroke="#fbf108" stroke-width="10" stroke-linecap="round" stroke-linejoin="round" opacity="0.7"/><path d="M1260 460 L1400 462 L1520 450" fill="none" stroke="#bcfb47" stroke-width="9" stroke-linecap="round" stroke-linejoin="round" opacity="0.6"/><path d="M960 430 L1060 446 L1160 462" fill="none" stroke="#fbf608" stroke-width="9" stroke-linecap="round" stroke-linejoin="round" opacity="0.7"/><path d="M1080 385 L1200 395 L1330 392 L1420 380" fill="none" stroke="#bcfb47" stroke-width="9" stroke-linecap="round" stroke-linejoin="round" opacity="0.7"/><path d="M1130 412 L1260 420 L1400 405 L1560 392" fill="none" stroke="#b2fb51" stroke-width="9" stroke-linecap="round" stroke-linejoin="round" opacity="0.6"/><path d="M1190 428 L1300 424" fill="none" stroke="#fbed08" stroke-width="8" stroke-linecap="round" stroke-linejoin="round" opacity="0.8"/><path d="M1500 420 L1560 420" fill="none" stroke="#fbed08" stroke-width="8" stroke-linecap="round" stroke-linejoin="round" opacity="0.8"/><path d="M950 400 L1020 408 L1080 420" fill="none" stroke="#fbed08" stroke-width="8" stroke-linecap="round" stroke-linejoin="round" opacity="0.7"/><path d="M905 388 L960 380 L1010 390" fill="none" stroke="#b2fb51" stroke-width="8" stroke-linecap="round" stroke-linejoin="round" opacity="0.6"/><path d="M740 390 L790 380 L840 392" fill="none" stroke="#bcfb47" stroke-width="8" stroke-linecap="round" stroke-linejoin="round" opacity="0.5"/><path d="M600 400 L640 410" fill="none" stroke="#fbf608" stroke-width="8" stroke-linecap="round" stroke-linejoin="round" opacity="0.7"/></g><g filter="url(#b1)"><rect x="255" y="186" width="1347" height="18" fill="url(#so)"/><rect x="440" y="208" width="1162" height="28" fill="url(#so)"/></g><rect x="72" y="131" width="435" height="270" fill="url(#vs)" mask="url(#vsm)"/></g></g></svg>
<svg style="left:0;top:0" width="2467" height="850" viewBox="0 0 2467 850" font-family="WenQuanYi Zen Hei, Liberation Sans, sans-serif">
<path d="M72.8 796.5 V132.2 H1602.3 V796.5 Z" fill="none" stroke="#e2e8f0" stroke-width="1.6"/>
<text x="72.5" y="120" font-size="15.9" text-anchor="middle" fill="#e8edf3" >0.0</text>
<text x="258.1" y="120" font-size="15.9" text-anchor="middle" fill="#e8edf3" >2.0</text>
<text x="443.7" y="120" font-size="15.9" text-anchor="middle" fill="#e8edf3" >4.0</text>
<text x="629.3" y="120" font-size="15.9" text-anchor="middle" fill="#e8edf3" >6.0</text>
<text x="814.9" y="120" font-size="15.9" text-anchor="middle" fill="#e8edf3" >8.0</text>
<text x="1000.5" y="120" font-size="15.9" text-anchor="middle" fill="#e8edf3" >10.0</text>
<text x="1186.1" y="120" font-size="15.9" text-anchor="middle" fill="#e8edf3" >12.0</text>
<text x="1371.7" y="120" font-size="15.9" text-anchor="middle" fill="#e8edf3" >14.0</text>
<text x="1557.3" y="120" font-size="15.9" text-anchor="middle" fill="#e8edf3" >16.0</text>
<text x="60" y="136.8" font-size="15.9" text-anchor="end" fill="#e8edf3" >1.0</text>
<text x="60" y="163.4" font-size="15.9" text-anchor="end" fill="#e8edf3" >0.5</text>
<text x="60" y="189.2" font-size="15.9" text-anchor="end" fill="#e8edf3" >0.0</text>
<text x="60" y="215.8" font-size="15.9" text-anchor="end" fill="#e8edf3" >-0.5</text>
<text x="60" y="242.4" font-size="15.9" text-anchor="end" fill="#e8edf3" >-1.0</text>
<text x="60" y="269.0" font-size="15.9" text-anchor="end" fill="#e8edf3" >-1.5</text>
<text x="60" y="295.6" font-size="15.9" text-anchor="end" fill="#e8edf3" >-2.0</text>
<text x="60" y="322.2" font-size="15.9" text-anchor="end" fill="#e8edf3" >-2.5</text>
<text x="60" y="348.8" font-size="15.9" text-anchor="end" fill="#e8edf3" >-3.0</text>
<text x="60" y="375.4" font-size="15.9" text-anchor="end" fill="#e8edf3" >-3.5</text>
<text x="60" y="402.0" font-size="15.9" text-anchor="end" fill="#e8edf3" >-4.0</text>
<text x="60" y="428.6" font-size="15.9" text-anchor="end" fill="#e8edf3" >-4.5</text>
<text x="60" y="455.2" font-size="15.9" text-anchor="end" fill="#e8edf3" >-5.0</text>
<text x="60" y="481.8" font-size="15.9" text-anchor="end" fill="#e8edf3" >-5.5</text>
<text x="60" y="508.4" font-size="15.9" text-anchor="end" fill="#e8edf3" >-6.0</text>
<text x="60" y="535.0" font-size="15.9" text-anchor="end" fill="#e8edf3" >-6.5</text>
<text x="60" y="561.6" font-size="15.9" text-anchor="end" fill="#e8edf3" >-7.0</text>
<text x="60" y="588.2" font-size="15.9" text-anchor="end" fill="#e8edf3" >-7.5</text>
<text x="60" y="614.8" font-size="15.9" text-anchor="end" fill="#e8edf3" >-8.0</text>
<text x="60" y="641.4" font-size="15.9" text-anchor="end" fill="#e8edf3" >-8.5</text>
<text x="60" y="668.0" font-size="15.9" text-anchor="end" fill="#e8edf3" >-9.0</text>
<text x="60" y="694.6" font-size="15.9" text-anchor="end" fill="#e8edf3" >-9.5</text>
<text x="60" y="721.2" font-size="15.9" text-anchor="end" fill="#e8edf3" >-10.0</text>
<text x="60" y="747.8" font-size="15.9" text-anchor="end" fill="#e8edf3" >-10.5</text>
<text x="60" y="774.4" font-size="15.9" text-anchor="end" fill="#e8edf3" >-11.0</text>
<text x="60" y="801.0" font-size="15.9" text-anchor="end" fill="#e8edf3" >-11.5</text>
<text x="1614" y="189.2" font-size="15.9" text-anchor="start" fill="#e8edf3" >0.0</text>
<text x="1614" y="215.8" font-size="15.9" text-anchor="start" fill="#e8edf3" >0.5</text>
<text x="1614" y="242.4" font-size="15.9" text-anchor="start" fill="#e8edf3" >1.0</text>
<text x="1614" y="269.1" font-size="15.9" text-anchor="start" fill="#e8edf3" >1.5</text>
<text x="1614" y="295.7" font-size="15.9" text-anchor="start" fill="#e8edf3" >2.0</text>
<text x="1614" y="322.3" font-size="15.9" text-anchor="start" fill="#e8edf3" >2.5</text>
<text x="1614" y="348.9" font-size="15.9" text-anchor="start" fill="#e8edf3" >3.0</text>
<text x="1614" y="375.5" font-size="15.9" text-anchor="start" fill="#e8edf3" >3.5</text>
<text x="1614" y="402.1" font-size="15.9" text-anchor="start" fill="#e8edf3" >4.0</text>
<text x="1614" y="428.8" font-size="15.9" text-anchor="start" fill="#e8edf3" >4.5</text>
<text x="1614" y="455.4" font-size="15.9" text-anchor="start" fill="#e8edf3" >5.0</text>
<text x="1614" y="482.0" font-size="15.9" text-anchor="start" fill="#e8edf3" >5.5</text>
<text x="1614" y="508.6" font-size="15.9" text-anchor="start" fill="#e8edf3" >6.0</text>
<text x="1614" y="535.2" font-size="15.9" text-anchor="start" fill="#e8edf3" >6.5</text>
<text x="1614" y="561.8" font-size="15.9" text-anchor="start" fill="#e8edf3" >7.0</text>
<text x="1614" y="588.5" font-size="15.9" text-anchor="start" fill="#e8edf3" >7.5</text>
<text x="1614" y="615.1" font-size="15.9" text-anchor="start" fill="#e8edf3" >8.0</text>
<text x="1614" y="641.7" font-size="15.9" text-anchor="start" fill="#e8edf3" >8.5</text>
<text x="1614" y="668.3" font-size="15.9" text-anchor="start" fill="#e8edf3" >9.0</text>
<text x="1614" y="694.9" font-size="15.9" text-anchor="start" fill="#e8edf3" >9.5</text>
<text x="1614" y="721.5" font-size="15.9" text-anchor="start" fill="#e8edf3" >10.0</text>
<text x="1614" y="748.2" font-size="15.9" text-anchor="start" fill="#e8edf3" >10.5</text>
<text x="1614" y="774.8" font-size="15.9" text-anchor="start" fill="#e8edf3" >11.0</text>
<text x="1614" y="801.4" font-size="15.9" text-anchor="start" fill="#e8edf3" >11.5</text>
<text x="72" y="819" font-size="15.9" text-anchor="middle" fill="#e8edf3" >0</text>
<text x="224" y="819" font-size="15.9" text-anchor="middle" fill="#e8edf3" >200</text>
<text x="447" y="819" font-size="15.9" text-anchor="middle" fill="#e8edf3" >400</text>
<text x="654" y="819" font-size="15.9" text-anchor="middle" fill="#e8edf3" >600</text>
<text x="756" y="819" font-size="15.9" text-anchor="middle" fill="#e8edf3" >800</text>
<text x="857" y="819" font-size="15.9" text-anchor="middle" fill="#e8edf3" >1000</text>
<text x="1034" y="819" font-size="15.9" text-anchor="middle" fill="#e8edf3" >1200</text>
<text x="1287" y="819" font-size="15.9" text-anchor="middle" fill="#e8edf3" >1400</text>
<text x="1540" y="819" font-size="15.9" text-anchor="middle" fill="#e8edf3" >1600</text>
<path d="M72.5 124 V131.500 M258.1 124 V131.500 M443.7 124 V131.500 M629.3 124 V131.500 M814.9 124 V131.500 M1000.5 124 V131.500 M1186.1 124 V131.500 M1371.7 124 V131.500 M1557.3 124 V131.500 M64 132.2 H72 M64 158.8 H72 M64 184.6 H72 M64 211.2 H72 M64 237.8 H72 M64 264.4 H72 M64 291.0 H72 M64 317.6 H72 M64 344.2 H72 M64 370.8 H72 M64 397.4 H72 M64 424.0 H72 M64 450.6 H72 M64 477.2 H72 M64 503.8 H72 M64 530.4 H72 M64 557.0 H72 M64 583.6 H72 M64 610.2 H72 M64 636.8 H72 M64 663.4 H72 M64 690.0 H72 M64 716.6 H72 M64 743.2 H72 M64 769.8 H72 M64 796.4 H72 M1602 184.6 H1609 M1602 211.2 H1609 M1602 237.8 H1609 M1602 264.5 H1609 M1602 291.1 H1609 M1602 317.7 H1609 M1602 344.3 H1609 M1602 370.9 H1609 M1602 397.5 H1609 M1602 424.2 H1609 M1602 450.8 H1609 M1602 477.4 H1609 M1602 504.0 H1609 M1602 530.6 H1609 M1602 557.2 H1609 M1602 583.9 H1609 M1602 610.5 H1609 M1602 637.1 H1609 M1602 663.7 H1609 M1602 690.3 H1609 M1602 716.9 H1609 M1602 743.6 H1609 M1602 770.2 H1609 M1602 796.8 H1609 M72.8 796.500 V803.500 M224.8 796.500 V803.500 M447.8 796.500 V803.500 M654.8 796.500 V803.500 M756.8 796.500 V803.500 M857.8 796.500 V803.500 M1034.8 796.500 V803.500 M1287.8 796.500 V803.500 M1540.8 796.500 V803.500" stroke="#e2e8f0" stroke-width="1.6" fill="none"/>
<text x="836" y="94" font-size="16.6" text-anchor="middle" fill="#e8edf3" >Distance (m)</text>
<text x="836" y="837" font-size="16.6" text-anchor="middle" fill="#e8edf3" >Signals</text>
<text x="0" y="0" font-size="16.6" text-anchor="middle" fill="#e8edf3" transform="translate(20 463) rotate(-90)">Elevation (m)</text>
<text x="0" y="0" font-size="16.6" text-anchor="middle" fill="#e8edf3" transform="translate(1649 465) rotate(90)">Depth (m) →</text>
<defs><linearGradient id="cb" x1="0" y1="0" x2="0" y2="1"><stop offset="0" stop-color="#080882"/><stop offset=".125" stop-color="#0808f4"/><stop offset=".25" stop-color="#0880f0"/><stop offset=".375" stop-color="#10f0f4"/><stop offset=".5" stop-color="#80f884"/><stop offset=".625" stop-color="#f8fb08"/><stop offset=".75" stop-color="#fb8408"/><stop offset=".875" stop-color="#f40808"/><stop offset="1" stop-color="#820808"/></linearGradient></defs>
<rect x="1669" y="131.5" width="23" height="664.500" fill="url(#cb)" stroke="#e2e8f0" stroke-width="1.2"/>
<text x="0" y="0" font-size="15.5" text-anchor="middle" fill="#e8edf3" transform="translate(1712 193) rotate(-90)">15000</text>
<text x="0" y="0" font-size="15.5" text-anchor="middle" fill="#e8edf3" transform="translate(1712 303) rotate(-90)">10000</text>
<text x="0" y="0" font-size="15.5" text-anchor="middle" fill="#e8edf3" transform="translate(1712 413) rotate(-90)">5000</text>
<text x="0" y="0" font-size="15.5" text-anchor="middle" fill="#e8edf3" transform="translate(1712 523) rotate(-90)">0</text>
<text x="0" y="0" font-size="15.5" text-anchor="middle" fill="#e8edf3" transform="translate(1712 632) rotate(-90)">-5000</text>
<text x="0" y="0" font-size="15.5" text-anchor="middle" fill="#e8edf3" transform="translate(1712 742) rotate(-90)">-10000</text>
<path d="M1692 193 H1696 M1692 303 H1696 M1692 413 H1696 M1692 523 H1696 M1692 632 H1696 M1692 742 H1696" stroke="#e2e8f0" stroke-width="1.2" fill="none"/>
<path d="M297 131 V796" stroke="#ec4a48" stroke-width="3" stroke-dasharray="9.5 5" fill="none"/>
<text x="297" y="123.5" font-size="16.5" text-anchor="middle" fill="#ef4444" font-family="DejaVu Sans Mono, Liberation Mono, monospace">M1</text>
<path d="M694 131 V796 M72 360 H1602" stroke="#f1f5f9" stroke-opacity=".85" stroke-width="1.6" stroke-dasharray="8 6" fill="none"/>
<rect x="680" y="107" width="28" height="20" fill="#0f172a" stroke="#e2e8f0" stroke-width="1.5"/><text x="694.0" y="122.5" font-size="15" text-anchor="middle" fill="#e8edf3" >6.7</text>
<rect x="678" y="797" width="32" height="19" fill="#0f172a" stroke="#e2e8f0" stroke-width="1.5"/><text x="694.0" y="811.5" font-size="15" text-anchor="middle" fill="#e8edf3" >677</text>
<rect x="34" y="348" width="34" height="21" fill="#0f172a" stroke="#e2e8f0" stroke-width="1.5"/><text x="51.0" y="364.5" font-size="15" text-anchor="middle" fill="#e8edf3" >-3.3</text>
<rect x="1605" y="348" width="28" height="21" fill="#0f172a" stroke="#e2e8f0" stroke-width="1.5"/><text x="1619.0" y="364.5" font-size="15" text-anchor="middle" fill="#e8edf3" >3.3</text>
</svg>
<div class="abs" style="left:716px;top:384px;width:240px;height:101px;background:#18212f;border-radius:6px;box-shadow:0 2px 8px rgba(0,0,0,.35);font-family:'DejaVu Sans Mono','Liberation Mono',monospace;font-size:16.6px;line-height:21px;color:#e2e8f0;padding:8px 9px;white-space:pre">Distance: 6.69 m
Elevation: -3.31 m
Depth: 3.30 m
Value: -7120.7588</div>
<div class="t pf" style="left:6px;top:56px;font-size:19.3px;line-height:21px;color:#f8fafc">ОзероБоровск - 5. algorithms.titles.average</div>
<div class="tb" style="left:1387px;top:51.5px;width:332px;height:43.500px"></div>
<div class="tb" style="left:2216px;top:52.5px;width:262px;height:43px"></div>
<svg style="left:0;top:0" width="2467" height="120" viewBox="0 0 2467 120">
<text x="1416" y="80" font-size="16.500" text-anchor="middle" fill="#38bfe9" font-family="WenQuanYi Zen Hei, Liberation Sans, sans-serif">1:1</text>
<text x="2245.500" y="80.500" font-size="16.500" text-anchor="middle" fill="#38bfe9" font-family="WenQuanYi Zen Hei, Liberation Sans, sans-serif">1:1</text>
<g transform="translate(1457.00 61.80) scale(0.8750)" fill="none" stroke="#38bfe9" stroke-width="2.6" stroke-linecap="butt" stroke-linejoin="miter"><path d="M8 1.5H1.5V8 M16 1.5H22.500V8 M1.5 16V22.500H8 M22.500 16V22.500H16"/></g>
<g transform="translate(1506.00 61.80) scale(0.8750)" fill="none" stroke="#38bfe9" stroke-width="1.25" stroke-linecap="round" stroke-linejoin="round"><path d="M1 2.500 Q3.200 0.800 5.400 2.500 T9.800 2.500 T14.200 2.500 T18.600 2.500 T23 2.500" stroke-width="1"/><path d="M12 4.500V23 M8.500 8 L12 4.500 L15.500 8 M8.500 19.500 L12 23 L15.500 19.500"/><path d="M0.500 7.500H8.500 M15.500 7.500H23.500 M0.500 13H8.500 M15.500 13H23.500 M0.500 18.500H8.500 M15.500 18.500H23.500" stroke-dasharray="2.200 1.200" stroke-linecap="butt"/></g>
<g transform="translate(1556.00 61.80) scale(0.8750)" fill="none" stroke="#38bfe9" stroke-width="2.1" stroke-linecap="round" stroke-linejoin="round"><path d="M12.83 2.18a2 2 0 0 0-1.66 0L2.6 6.08a1 1 0 0 0 0 1.83l8.58 3.91a2 2 0 0 0 1.66 0l8.58-3.9a1 1 0 0 0 0-1.83Z"/><path d="m22 17.65-9.170 4.160a2 2 0 0 1-1.66 0L2 17.65"/><path d="m22 12.65-9.170 4.160a2 2 0 0 1-1.66 0L2 12.65"/></g>
<g transform="translate(1601.00 61.80) scale(0.8750)" fill="none" stroke="#38bfe9" stroke-width="2.1" stroke-linecap="round" stroke-linejoin="round"><path d="M21.174 6.812a1 1 0 0 0-3.986-3.987L3.842 16.174a2 2 0 0 0-.5.83l-1.321 4.352a.5.5 0 0 0 .623.622l4.353-1.32a2 2 0 0 0 .83-.497z"/></g>
<g transform="translate(1643.00 61.80) scale(0.8750)" fill="none" stroke="#38bfe9" stroke-width="2.1" stroke-linecap="round" stroke-linejoin="round"><path d="M17 22H5a3 3 0 0 1-3-3V8"/><rect x="6" y="2" width="16" height="16" rx="3"/><path d="M9 17.500 L13.500 11 L16.500 15 L18.500 13 L22 16"/></g>
<g transform="translate(1685.00 61.80) scale(0.8750)" fill="none" stroke="#38bfe9" stroke-width="2.1" stroke-linecap="round" stroke-linejoin="round"><path d="M7 2.500H18.500a3 3 0 0 1 3 3V18.500a3 3 0 0 1-3 3H13 M2.500 11V5.500a3 3 0 0 1 3-3"/><rect x="2.500" y="15" width="7" height="6.500" rx="1.500"/><path d="M11.500 13 L18 6.500 M13 6.500H18V11.500"/></g>
<g transform="translate(2287.10 62.50) scale(0.8750)" fill="none" stroke="#38bfe9" stroke-width="2.6" stroke-linecap="butt" stroke-linejoin="miter"><path d="M8 1.5H1.5V8 M16 1.5H22.500V8 M1.5 16V22.500H8 M22.500 16V22.500H16"/></g>
<g transform="translate(2339.80 62.50) scale(0.8750)" fill="none" stroke="#38bfe9" stroke-width="1.25" stroke-linecap="round" stroke-linejoin="round"><path d="M1 2.500 Q3.200 0.800 5.400 2.500 T9.800 2.500 T14.200 2.500 T18.600 2.500 T23 2.500" stroke-width="1"/><path d="M12 4.500V23 M8.500 8 L12 4.500 L15.500 8 M8.500 19.500 L12 23 L15.500 19.500"/><path d="M0.500 7.500H8.500 M15.500 7.500H23.500 M0.500 13H8.500 M15.500 13H23.500 M0.500 18.500H8.500 M15.500 18.500H23.500" stroke-dasharray="2.200 1.200" stroke-linecap="butt"/></g>
<g transform="translate(2390.50 62.50) scale(0.8750)" fill="none" stroke="#38bfe9" stroke-width="2.1" stroke-linecap="round" stroke-linejoin="round"><path d="M17 22H5a3 3 0 0 1-3-3V8"/><rect x="6" y="2" width="16" height="16" rx="3"/><path d="M9 17.500 L13.500 11 L16.500 15 L18.500 13 L22 16"/></g>
<g transform="translate(2432.20 62.50) scale(0.8750)" fill="none" stroke="#38bfe9" stroke-width="2.1" stroke-linecap="round" stroke-linejoin="round"><path d="M7 2.500H18.500a3 3 0 0 1 3 3V18.500a3 3 0 0 1-3 3H13 M2.500 11V5.500a3 3 0 0 1 3-3"/><rect x="2.500" y="15" width="7" height="6.500" rx="1.500"/><path d="M11.500 13 L18 6.500 M13 6.500H18V11.500"/></g>
<path d="M2323.700 66V81 M2378 66V81" stroke="#3d5a73" stroke-width="1.500"/>
</svg>
<svg style="left:0;top:0" width="2467" height="850" viewBox="0 0 2467 850" font-family="WenQuanYi Zen Hei, Liberation Sans, sans-serif">
<rect x="1808.9" y="133.2" width="585.4" height="663.7" fill="none" stroke="#e2e8f0" stroke-width="1.8"/>
<text x="1910.8" y="121" font-size="15.9" text-anchor="middle" fill="#e8edf3" >-10000.0</text>
<text x="1910.8" y="817" font-size="15.9" text-anchor="middle" fill="#e8edf3" >-10000.0</text>
<text x="2101" y="121" font-size="15.9" text-anchor="middle" fill="#e8edf3" >0.0</text>
<text x="2101" y="817" font-size="15.9" text-anchor="middle" fill="#e8edf3" >0.0</text>
<text x="2291.3" y="121" font-size="15.9" text-anchor="middle" fill="#e8edf3" >10000.0</text>
<text x="2291.3" y="817" font-size="15.9" text-anchor="middle" fill="#e8edf3" >10000.0</text>
<text x="1796.5" y="190.4" font-size="15.9" text-anchor="end" fill="#e8edf3" >0.0</text>
<text x="2405.5" y="188.8" font-size="15.9" text-anchor="start" fill="#e8edf3" >0.0</text>
<text x="1796.5" y="297.0" font-size="15.9" text-anchor="end" fill="#e8edf3" >-2.0</text>
<text x="2405.5" y="295.4" font-size="15.9" text-anchor="start" fill="#e8edf3" >2.0</text>
<text x="1796.5" y="403.6" font-size="15.9" text-anchor="end" fill="#e8edf3" >-4.0</text>
<text x="2405.5" y="402.0" font-size="15.9" text-anchor="start" fill="#e8edf3" >4.0</text>
<text x="1796.5" y="510.2" font-size="15.9" text-anchor="end" fill="#e8edf3" >-6.0</text>
<text x="2405.5" y="508.6" font-size="15.9" text-anchor="start" fill="#e8edf3" >6.0</text>
<text x="1796.5" y="616.8" font-size="15.9" text-anchor="end" fill="#e8edf3" >-8.0</text>
<text x="2405.5" y="615.2" font-size="15.9" text-anchor="start" fill="#e8edf3" >8.0</text>
<text x="1796.5" y="723.4" font-size="15.9" text-anchor="end" fill="#e8edf3" >-10.0</text>
<text x="2405.5" y="721.8" font-size="15.9" text-anchor="start" fill="#e8edf3" >10.0</text>
<path d="M1910.8 125.500 V133 M1910.8 797 V803.500 M2101 125.500 V133 M2101 797 V803.500 M2291.3 125.500 V133 M2291.3 797 V803.500 M1800.500 185.7 H1808.500 M2394.500 185.7 H2401 M1800.500 292.3 H1808.500 M2394.500 292.3 H2401 M1800.500 398.9 H1808.500 M2394.500 398.9 H2401 M1800.500 505.5 H1808.500 M2394.500 505.5 H2401 M1800.500 612.1 H1808.500 M2394.500 612.1 H2401 M1800.500 718.7 H1808.500 M2394.500 718.7 H2401" stroke="#e2e8f0" stroke-width="1.6" fill="none"/>
<text x="2100.5" y="836" font-size="16.5" text-anchor="middle" fill="#e8edf3" >Volts</text>
<text x="0" y="0" font-size="16.6" text-anchor="middle" fill="#e8edf3" transform="translate(1756 463) rotate(-90)">Elevation (m)</text>
<text x="0" y="0" font-size="16.6" text-anchor="middle" fill="#e8edf3" transform="translate(2439 463) rotate(90)">Depth (m)</text>
<path d="M2101 134 V796" stroke="#55627a" stroke-width="1.3"/>
<path d="M2061.5 185.2 L2061.5 187.5 L2061.5 191.0 L2061.5 193.2 L2061.5 195.0 L2061.5 196.8 L2061.5 199.0 L2061.5 200.9 L2101.7 204.2 L2138.5 207.5 L2138.5 211.0 L2138.5 215.0 L2138.5 218.5 L2138.5 221.0 L2138.5 222.7 L2138.5 224.5 L2138.5 227.0 L2138.5 229.5 L2138.5 232.7 L2135.0 237.7 L2090.0 240.0 L2061.5 241.7 L2061.5 243.0 L2061.5 244.4 L2061.5 246.0 L2061.5 249.4 L2063.0 254.0 L2062.0 258.0 L2064.9 264.5 L2075.0 267.5 L2101.7 272.9 L2125.0 278.5 L2138.5 282.9 L2138.5 289.0 L2138.5 294.0 L2138.5 298.0 L2138.5 302.0 L2138.5 308.0 L2130.0 314.0 L2115.0 318.0 L2111.7 323.0 L2095.0 325.0 L2071.6 326.5 L2061.5 329.0 L2061.5 331.0 L2061.5 332.5 L2061.5 334.5 L2071.6 336.5 L2110.0 339.0 L2138.5 340.9 L2138.5 342.5 L2138.5 344.2 L2138.5 345.8 L2138.5 347.2 L2100.0 349.5 L2071.6 351.6 L2061.5 354.5 L2061.5 356.6 L2061.5 359.0 L2061.5 361.6 L2061.5 364.5 L2061.5 367.3 L2061.5 369.8 L2071.6 371.7 L2110.0 374.5 L2138.5 376.7 L2138.5 380.0 L2138.5 385.0 L2138.5 389.0 L2138.5 395.0 L2128.0 401.0 L2121.8 406.8 L2117.0 414.0 L2115.0 421.9 L2111.7 430.0 L2110.0 433.4 L2113.4 443.4 L2108.0 455.0 L2103.4 463.5 L2112.0 467.5 L2125.0 470.9 L2110.0 474.0 L2085.0 477.5 L2078.3 479.6 L2088.0 482.0 L2115.0 485.5 L2126.8 488.0 L2112.0 491.0 L2080.0 495.0 L2071.6 498.7 L2075.0 503.0 L2091.7 508.7 L2110.0 513.5 L2120.0 517.8 L2114.0 522.0 L2101.7 527.0 L2098.0 533.0 L2096.7 540.5 L2098.0 560.0 L2098.4 580.7 L2095.0 590.0 L2093.3 599.0 L2096.0 606.0 L2100.0 610.9 L2107.7 614.0 L2101.0 617.0 L2096.7 621.0 L2095.0 634.0 L2095.0 647.7 L2097.5 665.0 L2098.4 681.0 L2097.0 715.0 L2097.7 754.8 L2095.5 762.0 L2094.3 768.0 L2098.0 772.0 L2100.0 775.0 L2100.5 785.0 L2101.0 796.0" fill="none" stroke="#dc2626" stroke-width="1.3" stroke-linejoin="round"/>
<path d="M2061.5 185.2 L2040.0 187.5 L2000.0 191.0 L1989.0 193.2 L1988.0 195.0 L1996.0 196.8 L2030.0 199.0 L2061.5 200.9 L2101.7 204.2 L2160.0 207.5 L2222.0 211.0 L2290.0 215.0 L2330.0 218.5 L2348.0 221.0 L2352.8 222.7 L2346.0 224.5 L2320.0 227.0 L2280.0 229.5 L2222.0 232.7 L2135.0 237.7 L2090.0 240.0 L2054.8 241.7 L2041.0 243.0 L2038.0 244.4 L2046.0 246.0 L2061.5 249.4 L2063.0 254.0 L2062.0 258.0 L2064.9 264.5 L2075.0 267.5 L2101.7 272.9 L2125.0 278.5 L2138.5 282.9 L2158.0 289.0 L2169.0 294.0 L2172.0 298.0 L2168.0 302.0 L2151.9 308.0 L2130.0 314.0 L2115.0 318.0 L2111.7 323.0 L2095.0 325.0 L2071.6 326.5 L2046.0 329.0 L2038.0 331.0 L2036.0 332.5 L2045.0 334.5 L2071.6 336.5 L2110.0 339.0 L2138.5 340.9 L2165.0 342.5 L2178.7 344.2 L2165.0 345.8 L2138.5 347.2 L2100.0 349.5 L2071.6 351.6 L2020.0 354.5 L1987.9 356.6 L1965.0 359.0 L1954.4 361.6 L1962.0 364.5 L1987.9 367.3 L2030.0 369.8 L2071.6 371.7 L2110.0 374.5 L2138.5 376.7 L2155.0 380.0 L2162.0 385.0 L2156.0 389.0 L2138.5 395.0 L2128.0 401.0 L2121.8 406.8 L2117.0 414.0 L2115.0 421.9 L2111.7 430.0 L2110.0 433.4 L2113.4 443.4 L2108.0 455.0 L2103.4 463.5 L2112.0 467.5 L2125.0 470.9 L2110.0 474.0 L2085.0 477.5 L2078.3 479.6 L2088.0 482.0 L2115.0 485.5 L2126.8 488.0 L2112.0 491.0 L2080.0 495.0 L2071.6 498.7 L2075.0 503.0 L2091.7 508.7 L2110.0 513.5 L2120.0 517.8 L2114.0 522.0 L2101.7 527.0 L2098.0 533.0 L2096.7 540.5 L2098.0 560.0 L2098.4 580.7 L2095.0 590.0 L2093.3 599.0 L2096.0 606.0 L2100.0 610.9 L2107.7 614.0 L2101.0 617.0 L2096.7 621.0 L2095.0 634.0 L2095.0 647.7 L2097.5 665.0 L2098.4 681.0 L2097.0 715.0 L2097.7 754.8 L2095.5 762.0 L2094.3 768.0 L2098.0 772.0 L2100.0 775.0 L2100.5 785.0 L2101.0 796.0" fill="none" stroke="#2563eb" stroke-width="1.8" stroke-linejoin="round"/>
<path d="M2059.7 185.2 L2037.8 187.5 L1997.0 191.0 L1985.8 193.2 L1984.8 195.0 L1992.9 196.8 L2027.6 199.0 L2059.7 200.3 L2101.8 203.6 L2166.2 206.9 L2234.8 210.4 L2309.9 214.4 L2354.1 217.9 L2374.0 220.4 L2379.3 222.1 L2371.8 223.9 L2343.0 226.4 L2298.8 228.9 L2234.8 232.1 L2138.6 237.1 L2090.0 240.0 L2050.2 241.7 L2035.0 243.0 L2031.8 244.4 L2040.5 246.0 L2057.6 249.4 L2063.0 254.0 L2062.0 258.0 L2064.9 264.5 L2075.0 267.5 L2101.7 272.9 L2125.0 278.5 L2138.5 282.9 L2158.0 289.0 L2171.1 294.0 L2174.1 298.0 L2170.0 302.0 L2151.9 308.0 L2130.0 314.0 L2115.0 318.0 L2111.7 323.0 L2095.0 325.0 L2066.7 326.5 L2036.7 329.0 L2027.4 331.0 L2025.0 332.5 L2035.6 334.5 L2066.7 336.5 L2110.0 339.0 L2137.4 340.9 L2163.1 342.5 L2176.4 344.2 L2163.1 345.8 L2137.4 347.2 L2100.0 349.5 L2071.6 351.6 L2020.0 354.5 L1987.9 356.6 L1965.0 359.0 L1954.4 361.6 L1962.0 364.5 L1987.9 367.3 L2030.0 369.8 L2071.6 371.7 L2110.0 374.5 L2130.1 376.7 L2143.0 380.0 L2148.5 385.0 L2143.8 389.0 L2130.1 395.0 L2128.0 401.0 L2121.8 406.8 L2117.0 414.0 L2115.0 421.9 L2111.7 430.0 L2110.0 433.4 L2113.4 443.4 L2108.0 455.0 L2103.4 463.5 L2112.0 467.5 L2125.0 470.9 L2110.0 474.0 L2085.0 477.5 L2078.3 479.6 L2088.0 482.0 L2115.0 485.5 L2126.8 488.0 L2112.0 491.0 L2080.0 495.0 L2071.6 498.7 L2075.0 503.0 L2091.7 508.7 L2110.0 513.5 L2120.0 517.8 L2113.5 522.0 L2100.6 527.0 L2096.4 533.0 L2095.3 540.5 L2099.0 560.0 L2099.3 580.7 L2094.6 590.0 L2091.9 599.0 L2094.4 606.0 L2098.6 610.9 L2106.6 614.0 L2100.3 617.0 L2096.5 621.0 L2096.4 634.0 L2096.2 647.7 L2096.4 665.0 L2097.1 681.0 L2098.3 715.0 L2096.9 754.8 L2095.8 762.0 L2095.3 768.0 L2099.4 772.0 L2101.6 775.0 L2101.7 785.0 L2100.8 796.0" fill="none" stroke="#3aa862" stroke-width="1.4" stroke-linejoin="round"/>
<path d="M1808 361 H2394" stroke="#fde2e4" stroke-width="1.8" stroke-dasharray="8 6" fill="none"/>
<circle cx="1951" cy="361.500" r="6" fill="#f00"/>
<text x="1965" y="354" font-size="13" fill="#333a44" font-family="Liberation Sans, sans-serif">-7859.982</text>
<rect x="1769" y="349" width="35" height="20" fill="#0f172a" stroke="#e2e8f0" stroke-width="1.5"/><text x="1786.5" y="364.5" font-size="15" text-anchor="middle" fill="#e8edf3" >-3.3</text>
<rect x="2397" y="349" width="28" height="20" fill="#0f172a" stroke="#e2e8f0" stroke-width="1.5"/><text x="2411.0" y="364.5" font-size="15" text-anchor="middle" fill="#e8edf3" >3.3</text>
<rect x="2246" y="703.5" width="135" height="81" rx="5.500" fill="#e9ebee"/>
<path d="M2255 722.8 H2278" stroke="#2f6fed" stroke-width="2.6"/>
<text x="2285.3" y="727.8" font-size="14.7" text-anchor="start" fill="#222" >5. algor<tspan font-family="Liberation Sans, sans-serif">…</tspan></text>
<path d="M2255 743.75 H2278" stroke="#e8322a" stroke-width="2.6"/>
<text x="2285.3" y="748.75" font-size="14.7" text-anchor="start" fill="#222" >2. algor<tspan font-family="Liberation Sans, sans-serif">…</tspan></text>
<path d="M2255 764.6999999999999 H2278" stroke="#2fa85a" stroke-width="2.6"/>
<text x="2285.3" y="769.6999999999999" font-size="14.7" text-anchor="start" fill="#222" >4. algor<tspan font-family="Liberation Sans, sans-serif">…</tspan></text>
</svg>
<div class="t pf" style="left:1742px;top:56px;font-size:19.6px;line-height:22px;color:#f8fafc">Signal Nº 66</div>
<!-- top tab bars -->
<div class="tab" style="left:13px;top:14px">Project Manager</div>
<div class="tab on" style="left:169px;top:14px">Radargram</div>
<div class="tab" style="left:286px;top:14px">3D View</div>
<div class="tab" style="left:381px;top:14px">GIS</div>
<div class="hl" style="left:0;top:47.5px;width:1720px"></div>
<div class="hl" style="left:1733px;top:47.5px;width:734px"></div>
<div class="vl" style="left:1726px;top:0;height:1284px;background:#1e293b"></div>
<div class="abs" style="left:1723px;top:399px;width:7px;height:38px;border-radius:4px;background:#334155"></div>
<div class="abs" style="left:1723px;top:1050px;width:7px;height:38px;border-radius:4px;background:#334155"></div>
<div class="vl" style="left:1779px;top:0;height:48px;width:1.5px"></div>
<svg style="left:1746px;top:12px" width="20" height="20" viewBox="0 0 20 20"><path d="M6.5 4.5 L12 10 L6.5 15.5" fill="none" stroke="#94a3b8" stroke-width="2" stroke-linecap="round" stroke-linejoin="round"/></svg>
<div class="tab on" style="left:1796px;top:14px">Signal</div>

<!-- horizontal splitter -->
<div class="hl" style="left:0;top:846px;width:2467px;background:#1e293b"></div>
<div class="abs" style="left:1215px;top:844px;width:36px;height:6px;border-radius:3px;background:#334155"></div>

<!-- bottom-left tabs -->
<div class="tab" style="left:33px;top:870px">Project</div>
<div class="tab" style="left:158px;top:870px">Attributes</div>
<div class="tab" style="left:302px;top:870px">Edit</div>
<div class="tab" style="left:404px;top:870px">Coordinates</div>
<div class="tab on" style="left:567px;top:870px">Transform</div>
<div class="tab" style="left:717px;top:870px">Filters</div>
<div class="tab" style="left:835px;top:870px">Analysis</div>
<div class="tab" style="left:970px;top:870px">Modeling</div>
<div class="tab" style="left:1111px;top:870px">Geomodel</div>
<div class="tab" style="left:1262px;top:870px">Plots</div>
<div class="tab" style="left:1372px;top:870px">Anomalies</div>
<div class="tab" style="left:1524px;top:870px">History</div>
<div class="hl" style="left:0;top:904px;width:1720px"></div>
<div class="hl" style="left:531px;top:904px;width:149px;height:2px;background:#38b8e4"></div>

<!-- card -->
<div class="abs" style="left:8px;top:908px;width:1687px;height:361px;border:1.5px solid #1f2b3e;border-radius:10px"></div>
<div class="t" style="left:24px;top:918px;font-size:18.4px;font-weight:bold;color:#f8fafc;line-height:20px">CWT Denoising</div>
<div class="lbl" style="left:24px;top:966px">Continuous Wavelet Transform - better resolution for non-stationary signals</div>
<div class="lbl" style="left:24px;top:1000.5px">Wavelet type</div>
<div class="inp" style="left:24px;top:1027px;width:822px;height:55px;font-size:21px;line-height:51px">Mexican Hat (Ricker)</div>
<svg style="left:806px;top:1042px" width="24" height="24" viewBox="0 0 24 24"><path d="M4.5 8.5 L12 16 L19.5 8.5" fill="none" stroke="#cbd5e1" stroke-width="2.2" stroke-linecap="round" stroke-linejoin="round"/></svg>
<div class="lbl" style="left:24px;top:1084px">Num scales</div>
<div class="lbl" style="left:579px;top:1084px">Min scale</div>
<div class="lbl" style="left:1134px;top:1084px">Max scale</div>
<div class="inp" style="left:24px;top:1110px;width:545px">64</div>
<div class="inp" style="left:579px;top:1110px;width:545px">1</div>
<div class="inp" style="left:1134px;top:1110px;width:544px">128</div>
<div class="cb" style="left:24px;top:1169px"></div>
<svg style="left:24px;top:1169px" width="27" height="27" viewBox="0 0 27 27"><path d="M6.5 14 L11.5 19 L20.5 8.5" fill="none" stroke="#0f172a" stroke-width="1.7" stroke-linecap="round" stroke-linejoin="round"/></svg>
<div class="t" style="left:61px;top:1172px;font-size:18.4px;line-height:21px;color:#f1f5f9">Log scale</div>
<div class="cb" style="left:150px;top:1169px"></div>
<svg style="left:150px;top:1169px" width="27" height="27" viewBox="0 0 27 27"><path d="M6.5 14 L11.5 19 L20.5 8.5" fill="none" stroke="#0f172a" stroke-width="1.7" stroke-linecap="round" stroke-linejoin="round"/></svg>
<div class="t" style="left:187px;top:1172px;font-size:18.4px;line-height:21px;color:#f1f5f9">Soft threshold</div>
<div class="abs" style="left:24px;top:1206px;width:164px;height:47px;border-radius:9px;background:#f8fafc;color:#64748b;font-size:21px;line-height:46px;text-align:center">CWT Denoise</div>
<!-- scrollbar -->
<svg style="left:1706px;top:910px" width="14" height="10" viewBox="0 0 14 10"><path d="M1.5 8 L7 2.5 L12.5 8 Z" fill="#f1f5f9"/></svg>
<svg style="left:1706px;top:1271px" width="14" height="10" viewBox="0 0 14 10"><path d="M1.5 2 L7 7.5 L12.5 2 Z" fill="#f1f5f9"/></svg>
<div class="abs" style="left:1708px;top:1192px;width:10px;height:32px;border-radius:5px;background:#f1f5f9"></div>

<!-- bottom-right: history -->
<svg style="left:1746px;top:869px" width="20" height="20" viewBox="0 0 20 20"><path d="M6.5 4.5 L12 10 L6.5 15.5" fill="none" stroke="#94a3b8" stroke-width="2" stroke-linecap="round" stroke-linejoin="round"/></svg>
<div class="vl" style="left:1779px;top:853px;height:53px;width:1.5px"></div>
<div class="tab on" style="left:1796px;top:870px">History</div>
<div class="hl" style="left:1733px;top:905px;width:734px"></div>
<div class="hl" style="left:1781px;top:904px;width:84px;height:2px;background:#38b8e4"></div>
<div class="t" style="left:1754px;top:935px;font-size:21px;font-weight:bold;color:#f8fafc;line-height:24px">History (Graph)</div>
<div class="abs" style="left:2371px;top:928px;width:76px;height:39px;border-radius:9px;background:#f8fafc;color:#64748b;font-size:18.4px;line-height:38px;text-align:center">Reset</div>
<div class="abs" style="left:1754px;top:978px;width:693px;height:287px;border:1.5px solid #2a384c;border-radius:8px;overflow:hidden"></div>
<!-- history graph -->
<svg style="left:0;top:0" width="2467" height="1284" viewBox="0 0 2467 1284">
<g fill="none" stroke-linecap="round">
<path d="M1944.8 1022.5 L2018.5 979.8" stroke="#64748b" stroke-width="0.9"/><path d="M1943.8 1020.9 L2017.5 978.2" stroke="#2a93a8" stroke-width="0.9"/><path d="M2175.3 1020.9 L2101.5 978.2" stroke="#64748b" stroke-width="0.9"/><path d="M2174.3 1022.5 L2100.5 979.8" stroke="#2a93a8" stroke-width="0.9"/><path d="M2180.1 1097.0 L2180.1 1162.0" stroke="#64748b" stroke-width="0.9"/><path d="M2181.9 1097.0 L2181.9 1162.0" stroke="#2a93a8" stroke-width="0.9"/>
<circle cx="1944.3" cy="1021.7" r="7" stroke="#64748b" stroke-width="1.6"/>
<circle cx="2174.8" cy="1021.7" r="7" stroke="#64748b" stroke-width="1.6"/>
<circle cx="2181" cy="1162.5" r="7" stroke="#64748b" stroke-width="1.6"/>
</g></svg>
<div class="node" style="left:1839px;top:1026px"><b>4. Average</b><i>Window: 5</i><s></s></div>
<div class="node" style="left:2082px;top:1026px"><b>4. CWT Denoise</b><s></s></div>
<div class="node" style="left:2082px;top:1170px;border-color:#22c3e6;background:#12304a"><b>5. Average</b><i>Window: 5</i><s></s></div>
<svg style="left:0;top:0" width="2467" height="1284" viewBox="0 0 2467 1284">
<defs>
<g id="zap" fill="none" stroke="#64748b" stroke-width="0.9" stroke-linecap="round" stroke-linejoin="round"><path d="M1 -4.5 L-2.2 -0.6 L2.2 0.6 L-0.6 4.6"/></g>
<g id="eye" fill="none" stroke="#38bdf8" stroke-width="1.1" stroke-linecap="round" stroke-linejoin="round"><path d="M-6.2 0 C-4.2 -5.4 4.2 -5.4 6.2 0 C4.2 5.4 -4.2 5.4 -6.2 0 Z"/><circle r="1.8"/></g>
<g id="eyeoff" fill="none" stroke="#94a3b8" stroke-width="1.1" stroke-linecap="round" stroke-linejoin="round"><path d="M-6.2 0 C-4.2 -5.4 4.2 -5.4 6.2 0 C4.2 5.4 -4.2 5.4 -6.2 0 Z"/><path d="M-5 -5 L5.2 5"/></g>
</defs>
<use href="#zap" x="1999.6" y="1042"/><use href="#eyeoff" x="2017.3" y="1041.7"/>
<use href="#zap" x="2242.6" y="1042"/><use href="#eye" x="2260.3" y="1041.7"/>
<use href="#zap" x="2242.6" y="1186"/><use href="#eye" x="2260.3" y="1185.7"/>
</svg>
<!-- graph controls -->
<div class="abs" style="left:2395px;top:1025px;width:45px;height:192px;border:1.5px solid #2a384c;border-radius:5px;background:#0f172a;box-shadow:0 2px 6px rgba(0,0,0,.4)"></div>
<svg style="left:0;top:0" width="2467" height="1284" viewBox="0 0 2467 1284">
<g fill="none" stroke="#38b8e4" stroke-width="1.9" stroke-linecap="round" stroke-linejoin="round">
<path d="M2409 1047 H2426 M2417.5 1038.5 V1055.5"/>
<path d="M2409 1083 H2426"/>
<path d="M2407.5 1116.5 V1112 H2412 M2423 1112 H2427.5 V1116.5 M2427.5 1126 V1130.5 H2423 M2412 1130.5 H2407.5 V1126"/>
<path d="M2412.5 1148 H2423.5 A3 3 0 0 1 2426.500 1151 V1163 A3 3 0 0 1 2423.5 1166 H2418.500 M2408.5 1156.500 V1151 A3 3 0 0 1 2411.5 1148"/>
<rect x="2408.5" y="1160.500" width="6" height="5.5" rx="1.2"/>
<path d="M2416 1158.500 L2422.5 1152 M2418 1152 H2422.5 V1156.500"/>
<rect x="2408.5" y="1185" width="18" height="18" rx="3"/>
<circle cx="2414" cy="1190.5" r="1.5"/>
<path d="M2426.500 1197 L2422.500 1193 C2421.500 1192 2420.500 1192 2419.500 1193 L2410.500 1202.500"/>
</g></svg>
</body></html>
